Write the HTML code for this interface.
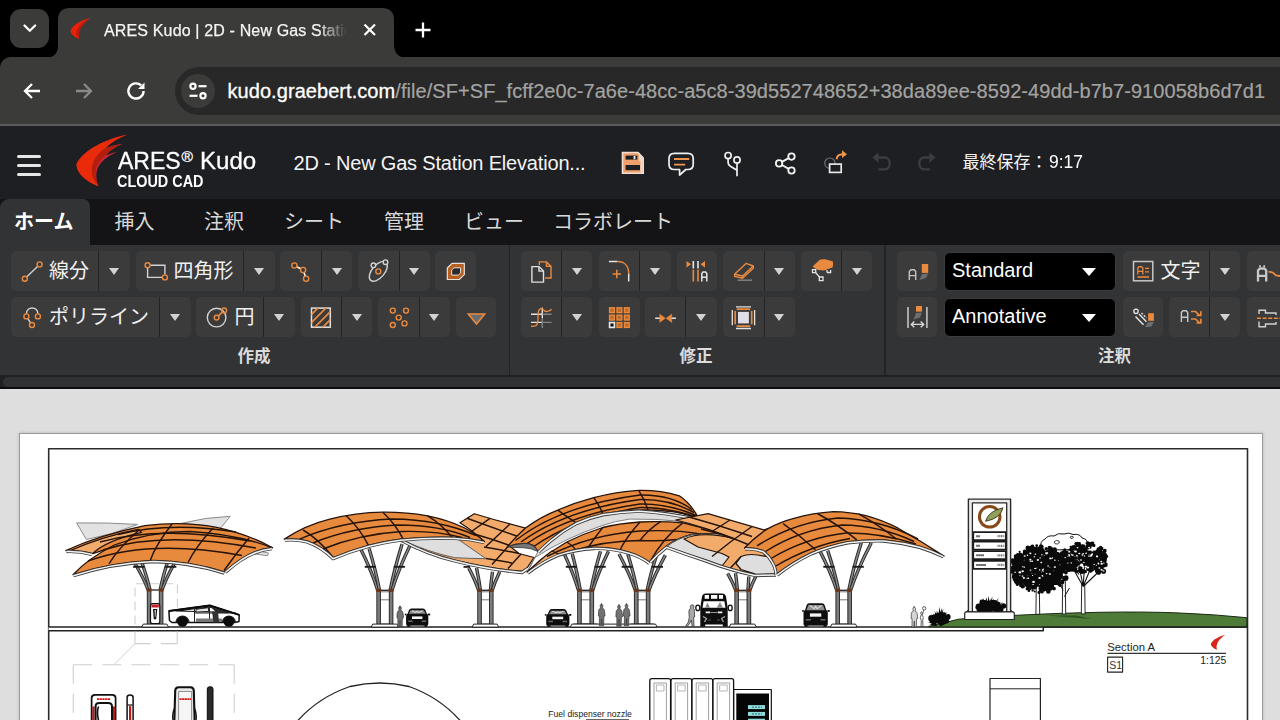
<!DOCTYPE html>
<html><head><meta charset="utf-8"><title>ARES Kudo</title>
<style>
*{box-sizing:border-box;margin:0;padding:0}
html,body{width:1280px;height:720px;overflow:hidden;background:#000;font-family:"Liberation Sans",sans-serif;color:#fff}
.abs{position:absolute}
.t{position:absolute;white-space:pre;line-height:1}
#page{position:relative;width:1280px;height:720px;overflow:hidden;background:#000}
.btn{position:absolute;height:40px;background:#3b3b3c;border-radius:5px}
.btn i{position:absolute;top:0;width:1px;height:40px;background:#232325}
.dd{position:absolute;width:0;height:0;margin:.3px 0 0 1.7px;border-left:5.3px solid transparent;border-right:5.3px solid transparent;border-top:7.4px solid #d2d2d2}
</style></head><body><div id="page">
<!-- browser chrome -->
<div class="abs" style="left:10px;top:9px;width:39px;height:39px;border-radius:11px;background:#3b3b39"></div>
<svg class="abs" style="left:22px;top:23px" width="16" height="12" viewBox="0 0 16 12"><path d="M2.5 2.5 L7.8 7.8 L13.1 2.5" fill="none" stroke="#fff" stroke-width="2.3" stroke-linecap="round" stroke-linejoin="round"/></svg>
<!-- toolbar -->
<div class="abs" style="left:0;top:57px;width:1280px;height:68px;background:#3b3b39;border-top-left-radius:11px"></div>
<!-- tab -->
<svg class="abs" style="left:44px;top:8px" width="380" height="50" viewBox="0 0 380 50"><path d="M0 50 Q14 50 14 38 V12 Q14 0 26 0 H338 Q350 0 350 12 V36 Q350 50 364 50 Z" fill="#3b3b39"/></svg>
<!-- favicon -->
<svg class="abs" style="left:69px;top:17px" width="24" height="24" viewBox="0 0 24 24"><path d="M21.300 1 C13 3 3.500 7.500 1.600 13.600 C1.500 17 5.500 20.500 10.200 21.900 C8 16 12 7.500 21.300 1 Z" fill="#e8220a"/><path d="M21.300 1 C13 5 7 11.500 7.300 16.500 C7.500 19 9 20.800 10.200 21.900 C8 16 12 7.500 21.300 1 Z" fill="#b81a10"/></svg>
<div class="t" style="left:104px;top:23.100px;font-size:16px;letter-spacing:.15px;color:#f4f4f4;-webkit-text-stroke:.25px #f4f4f4;width:246px;overflow:hidden;-webkit-mask-image:linear-gradient(90deg,#000 214px,transparent 243px);mask-image:linear-gradient(90deg,#000 214px,transparent 243px)">ARES Kudo | 2D - New Gas Station</div>
<svg class="abs" style="left:362px;top:22px" width="16" height="16" viewBox="0 0 16 16"><path d="M2.5 2.5 L13 13 M13 2.5 L2.5 13" stroke="#fff" stroke-width="2.2" fill="none"/></svg>
<svg class="abs" style="left:413px;top:20px" width="20" height="20" viewBox="0 0 20 20"><path d="M10 2.5 V17.5 M2.5 10 H17.5" stroke="#fff" stroke-width="2.3" fill="none"/></svg>
<!-- nav icons -->
<svg class="abs" style="left:22px;top:81px" width="20" height="20" viewBox="0 0 20 20"><path d="M18 10 H3.5 M10 3 L3 10 L10 17" stroke="#fff" stroke-width="2.3" fill="none" stroke-linejoin="miter"/></svg>
<svg class="abs" style="left:74px;top:81px" width="20" height="20" viewBox="0 0 20 20"><path d="M2 10 H16.5 M10 3 L17 10 L10 17" stroke="#8a8a88" stroke-width="2.3" fill="none"/></svg>
<svg class="abs" style="left:125px;top:80px" width="22" height="22" viewBox="0 0 22 22"><path d="M18.6 11 A7.6 7.6 0 1 1 16.2 5.4" stroke="#fff" stroke-width="2.4" fill="none"/><path d="M19.5 2.5 V9 H13 Z" fill="#fff"/></svg>
<!-- url bar -->
<div class="abs" style="left:175px;top:67px;width:1130px;height:48px;border-radius:24px;background:#282828"></div>
<div class="abs" style="left:181px;top:74px;width:34px;height:34px;border-radius:17px;background:#3b3b39"></div>
<svg class="abs" style="left:187px;top:80px" width="22" height="22" viewBox="0 0 22 22"><g stroke="#fff" stroke-width="2.2" fill="none"><circle cx="6" cy="6.2" r="2.6"/><path d="M11.5 6.2 H19.5"/><circle cx="16" cy="15.8" r="2.6"/><path d="M2.5 15.8 H10.5"/></g></svg>
<div class="t" style="left:227.500px;top:81.300px;font-size:20px;letter-spacing:.06px;color:#fff;-webkit-text-stroke:.3px #fff">kudo.graebert.com<span style="color:#a3a3a1;letter-spacing:.06px;-webkit-text-stroke:.2px #a3a3a1">/file/SF+SF_fcff2e0c-7a6e-48cc-a5c8-39d552748652+38da89ee-8592-49dd-b7b7-910058b6d7d1</span></div>
<div class="abs" style="left:0;top:124px;width:1280px;height:1.5px;background:#5a5a5a"></div>
<!-- app header -->
<div class="abs" style="left:0;top:125.5px;width:1280px;height:73px;background:#1e1f22"></div>
<div class="abs" style="left:17px;top:154.5px;width:24px;height:3px;border-radius:1.5px;background:#e6e6e6"></div>
<div class="abs" style="left:17px;top:163.5px;width:24px;height:3px;border-radius:1.5px;background:#e6e6e6"></div>
<div class="abs" style="left:17px;top:172.5px;width:24px;height:3px;border-radius:1.5px;background:#e6e6e6"></div>
<svg class="abs" style="left:0;top:0" width="1280" height="720" viewBox="0 0 1280 720"><path d="M126.900 134.700 C108 138.500 84 149 76.700 163.600 C75.500 171.500 85 181.500 98.400 186.200 C95.500 178 95.500 171 99.300 165.300 C103.500 159 110 155 117.100 152 C112 153 108 154.500 105.600 155.600 C110 150 116 146.500 122.400 144 C115 145 109 146.500 105.600 148 C111 142.500 118 138 126.900 134.700 Z" fill="#c8263a"/><path d="M122.400 144 C113 145.500 106 148 103 149.500 C95 156 90 166 92 176 C93 180 95.500 183.500 98.400 186.200 C94.500 177 95 170 97.500 165.500 C100 160.500 103 157.500 105.600 155.600 C110 150 116 146.500 122.400 144 Z" fill="#b41e0c"/><path d="M126.900 134.700 C108 138.500 84 149 76.700 163.600 C75.500 171.500 85 181.500 98.400 186.200 C93.500 180.500 91 174 92 166 C93.500 158 99 152 105.600 148 C111 142.500 118 138 126.900 134.700 Z" fill="#e92b0a"/></svg>
<div class="t" style="left:118px;top:149.800px;font-size:23.6px;transform:scaleX(.976);transform-origin:0 0;color:#fff;-webkit-text-stroke:.3px #fff">ARES</div>
<div class="t" style="left:181.400px;top:149.200px;font-size:15.500px;color:#fff;-webkit-text-stroke:.3px #fff">®</div>
<div class="t" style="left:199.500px;top:149.800px;font-size:23.6px;transform:scaleX(1.02);transform-origin:0 0;color:#fff;-webkit-text-stroke:.3px #fff">Kudo</div>
<div class="t" style="left:117.400px;top:174.100px;font-size:15.600px;font-weight:700;transform:scaleX(.925);transform-origin:0 0;color:#fff">CLOUD CAD</div>
<div class="t" style="left:293.5px;top:153px;font-size:20px;letter-spacing:-.18px;color:#f4f4f4">2D - New Gas Station Elevation...</div>
<div class="t" style="left:1048.800px;top:154.300px;font-size:17.8px;transform:scaleX(.985);transform-origin:0 0;color:#fff">9:17</div>
<svg class="abs" style="left:0;top:0" width="1280" height="720" viewBox="0 0 1280 720" fill="none">
<!-- save -->
<path d="M621.700 151.700 H638.300 L644 157.400 V174 H621.700 Z" fill="#f2dfd2"/>
<path d="M623.300 153.300 H637.600 L642.400 158.100 V172.400 H623.300 Z" fill="#f0a06c"/>
<path d="M639 153.300 L642.400 156.800 V172.400 H640.500 V161 H639 Z" fill="#ecdcd4"/>
<rect x="625.600" y="155.600" width="11.700" height="4" fill="#1e1f22"/>
<rect x="633.600" y="156" width="1.800" height="3.200" fill="#f4f4f4"/>
<rect x="625.600" y="165" width="14.400" height="5.200" fill="#1e1f22"/>
<!-- comment -->
<path d="M674.500 153.300 H687.700 C691.500 153.300 693.200 155.500 693.200 158.500 V164.500 C693.200 167.500 691.500 169.500 687.700 169.500 H685.800 L679.600 175 V169.500 H674.500 C670.700 169.500 669 167.500 669 164.500 V158.500 C669 155.500 670.700 153.300 674.500 153.300 Z" stroke="#f0f0f0" stroke-width="1.700" stroke-linejoin="round"/>
<path d="M674 159 H689.200 M674 164.600 H685.200" stroke="#f0964e" stroke-width="1.800"/>
<!-- branch -->
<g stroke="#f0f0f0" stroke-width="1.700"><circle cx="728.100" cy="155.600" r="3.100"/><circle cx="737" cy="159.900" r="3.100"/><path d="M737 163 V176.200 M728.100 158.700 V162.500 C728.100 165 729.500 165.800 737 170.300"/></g>
<!-- share -->
<g stroke="#f4f4f4" stroke-width="1.800"><circle cx="791.500" cy="156.600" r="3.200"/><circle cx="779.100" cy="163.400" r="3.200"/><circle cx="791.500" cy="170.500" r="3.200"/><path d="M781.900 161.900 L788.700 158.100 M781.900 165 L788.700 168.900"/></g>
<!-- export -->
<circle cx="829.900" cy="163.200" r="5.200" stroke="#6e6f72" stroke-width="1.200"/>
<rect x="829.600" y="164.100" width="11.600" height="8.300" stroke="#e8e8e8" stroke-width="1.700" fill="#1e1f22"/>
<path d="M836.700 159.300 C836.700 155.800 839 154.200 843 154.200" stroke="#f0964e" stroke-width="2"/>
<path d="M842 150.300 L847 154.200 L842 158.100 Z" fill="#f0964e"/>
<!-- undo / redo -->
<g stroke="#3c3d40" stroke-width="2.300"><path d="M877 157.500 H884.500 C891.500 157.500 891.500 169.300 884.500 169.300 H878.400"/><path d="M931 157.500 H924.500 C917.500 157.500 917.500 169.300 924.500 169.300 H929.800"/></g>
<path d="M872.400 157.500 L878.500 152.300 V162.700 Z M935.500 157.500 L929.400 152.300 V162.700 Z" fill="#3c3d40"/>
</svg>
<!-- tab bar + ribbon -->
<div class="abs" style="left:0;top:198.5px;width:1280px;height:47px;background:#141416"></div>
<div class="abs" style="left:0;top:198.5px;width:90px;height:48px;background:#323335;border-top-left-radius:9px;border-top-right-radius:7px"></div>
<div class="abs" style="left:0;top:245px;width:1280px;height:130.500px;background:#323335"></div>
<div class="abs" style="left:0;top:375px;width:1280px;height:15px;background:#0c0c0e"></div><div class="abs" style="left:0;top:375px;width:1280px;height:12.300px;background:#202022"></div>
<div class="abs" style="left:3px;top:377px;width:1290px;height:10.300px;border-radius:5px;background:#303133"></div>
<div class="abs" style="left:508.500px;top:245px;width:1.5px;height:130px;background:#242426"></div>
<div class="abs" style="left:884px;top:245px;width:1.5px;height:130px;background:#242426"></div>
<div class="btn" style="left:11px;top:251px;width:119px"><i style="left:86.5px"></i></div>
<div class="dd" style="left:107.5px;top:268px"></div>
<div class="btn" style="left:135.5px;top:251px;width:139.5px"><i style="left:107.0px"></i></div>
<div class="dd" style="left:252.5px;top:268px"></div>
<div class="btn" style="left:280px;top:251px;width:72px"><i style="left:41.0px"></i></div>
<div class="dd" style="left:330.25px;top:268px"></div>
<div class="btn" style="left:357.5px;top:251px;width:72.0px"><i style="left:41.0px"></i></div>
<div class="dd" style="left:407.75px;top:268px"></div>
<div class="btn" style="left:435px;top:251px;width:41px"></div>
<div class="btn" style="left:11px;top:297px;width:179.5px"><i style="left:147.5px"></i></div>
<div class="dd" style="left:168.25px;top:314px"></div>
<div class="btn" style="left:196px;top:297px;width:98.5px"><i style="left:67.0px"></i></div>
<div class="dd" style="left:272.5px;top:314px"></div>
<div class="btn" style="left:300.5px;top:297px;width:71.5px"><i style="left:40.0px"></i></div>
<div class="dd" style="left:350.0px;top:314px"></div>
<div class="btn" style="left:377.5px;top:297px;width:72.0px"><i style="left:41.0px"></i></div>
<div class="dd" style="left:427.75px;top:314px"></div>
<div class="btn" style="left:455.5px;top:297px;width:40.5px"></div>
<div class="btn" style="left:520.5px;top:251px;width:71.5px"><i style="left:40.5px"></i></div>
<div class="dd" style="left:570.25px;top:268px"></div>
<div class="btn" style="left:598.5px;top:251px;width:72.0px"><i style="left:40.5px"></i></div>
<div class="dd" style="left:648.5px;top:268px"></div>
<div class="btn" style="left:676.5px;top:251px;width:40.0px"></div>
<div class="btn" style="left:723px;top:251px;width:71.5px"><i style="left:40.5px"></i></div>
<div class="dd" style="left:772.75px;top:268px"></div>
<div class="btn" style="left:800.5px;top:251px;width:71.5px"><i style="left:40.5px"></i></div>
<div class="dd" style="left:850.25px;top:268px"></div>
<div class="btn" style="left:520.5px;top:297px;width:71.5px"><i style="left:40.5px"></i></div>
<div class="dd" style="left:570.25px;top:314px"></div>
<div class="btn" style="left:598.5px;top:297px;width:41.0px"></div>
<div class="btn" style="left:645px;top:297px;width:71.5px"><i style="left:40.0px"></i></div>
<div class="dd" style="left:694.5px;top:314px"></div>
<div class="btn" style="left:723px;top:297px;width:71.5px"><i style="left:40.5px"></i></div>
<div class="dd" style="left:772.75px;top:314px"></div>
<div class="btn" style="left:897px;top:251px;width:40px"></div>
<div class="btn" style="left:1122.5px;top:251px;width:117.5px"><i style="left:86.5px"></i></div>
<div class="dd" style="left:1218.25px;top:268px"></div>
<div class="btn" style="left:1246.5px;top:251px;width:43.5px"></div>
<div class="btn" style="left:897px;top:297px;width:40px"></div>
<div class="btn" style="left:1122.5px;top:297px;width:40.5px"></div>
<div class="btn" style="left:1169px;top:297px;width:71px"><i style="left:40.0px"></i></div>
<div class="dd" style="left:1218.25px;top:314px"></div>
<div class="btn" style="left:1246.5px;top:297px;width:43.5px"></div>
<div class="abs" style="left:944px;top:251.5px;width:172px;height:39px;background:#000;border:1px solid #3c3c3e;border-radius:6px"></div>
<div class="t" style="left:952px;top:260.3px;font-size:20px;color:#fff">Standard</div>
<div class="abs" style="left:1082px;top:267.5px;width:0;height:0;border-left:7.5px solid transparent;border-right:7.5px solid transparent;border-top:8.5px solid #fff"></div>
<div class="abs" style="left:944px;top:298px;width:172px;height:39px;background:#000;border:1px solid #3c3c3e;border-radius:6px"></div>
<div class="t" style="left:952px;top:306.1px;font-size:20px;color:#fff">Annotative</div>
<div class="abs" style="left:1082px;top:314px;width:0;height:0;border-left:7.5px solid transparent;border-right:7.5px solid transparent;border-top:8.5px solid #fff"></div>
<svg class="abs" style="left:0;top:0" width="1280" height="720" viewBox="0 0 1280 720" fill="none" stroke-linecap="butt">
<defs><clipPath id="hc"><rect x="311.5" y="308.100" width="18.800" height="19.100"/></clipPath></defs>
<g stroke="#d2d2d2" stroke-width="1.4">
<!-- line -->
<path d="M26.6 276.900 L37.800 266.200"/>
<!-- rect -->
<path d="M150.200 265.300 H164.900 V274.600 M162.100 277.400 H147.600 V268"/>
<!-- polyline arc -->
<path d="M26.400 313.800 C26 306 38.300 306 37.900 313.800 M27.800 318.600 L30.600 322.900"/>
<!-- circle -->
<circle cx="216.600" cy="317.600" r="9.300"/>
<!-- 3pt polyline -->
<path d="M296.800 266.800 L300.600 268.800 M304 272.600 L305.200 276.100" stroke="#fff" stroke-width="1.6"/>
<!-- ellipse -->
<ellipse cx="378.300" cy="271.300" rx="11.800" ry="6.300" transform="rotate(-50 378.300 271.300)"/>
<circle cx="373.400" cy="265.300" r="2.300" fill="#3b3b3c"/><circle cx="385.500" cy="262.200" r="2.300" fill="#3b3b3c"/>
<!-- hatch box -->
<rect x="311.500" y="308.100" width="18.800" height="19.100" stroke-width="1.500" stroke="#e4e4e4"/>
</g>
<g stroke="#e98a3e" stroke-width="1.400">
<circle cx="39.600" cy="264.400" r="2.500"/><circle cx="24.800" cy="278.700" r="2.500"/>
<circle cx="147.600" cy="265.300" r="2.500"/><circle cx="164.900" cy="277.400" r="2.500"/>
<circle cx="26.400" cy="316.400" r="2.500"/><circle cx="37.900" cy="316.400" r="2.500"/><circle cx="32" cy="325" r="2.500"/>
<path d="M218.400 315.900 L222.400 312.100" stroke-width="1.600"/>
<circle cx="216.600" cy="317.600" r="2.400"/><circle cx="224.200" cy="310.400" r="2.400"/>
<circle cx="294.400" cy="265.500" r="2.600"/><circle cx="303.100" cy="270" r="2.600"/><circle cx="306.100" cy="278.700" r="2.600"/>
<circle cx="378.300" cy="271.400" r="2.500"/>
<g clip-path="url(#hc)" stroke-width="1.700"><path d="M305 321 L322 304 M308 326 L331 303 M312 330 L335 307 M318 332 L338 312 M324 334 L340 318"/></g>
<circle cx="392.800" cy="310.600" r="2.500"/><circle cx="406" cy="310.600" r="2.500"/><circle cx="398.700" cy="317.600" r="2.500"/><circle cx="392.800" cy="325" r="2.500"/><circle cx="404.500" cy="323.400" r="2.500"/>
</g>
<!-- region -->
<path d="M447.300 268 L452.100 263.300 H464.300 V274.600 L459.400 279.500 H447.300 Z" fill="#b5601e" stroke="#e8e0da" stroke-width="1.200"/>
<path d="M451.700 270 L454 267.800 H460.600 V272.900 L458.300 275.100 H451.700 Z" fill="#2a2a2c" stroke="#e8e0da" stroke-width="1"/>
<!-- triangle -->
<path d="M468.300 314 H484.700 L476.500 324 Z" fill="#6c6c6e" stroke="#e98a3e" stroke-width="1.600"/>
<!-- copy -->
<path d="M539.300 265 V261.900 H546.500 L551 266.400 V278 H545.200 M546.500 261.900 V266.400 H551" stroke="#e98a3e" stroke-width="1.400"/>
<path d="M531.900 266.600 H539 L543.500 271.100 V282.100 H531.900 Z M539 266.600 V271.100 H543.500" stroke="#e0e0e0" stroke-width="1.400"/>
<!-- trim -->
<path d="M531 314.200 H542.300 M531 322.400 H542.300 M542.300 307.400 V318" stroke="#e4e4e4" stroke-width="1.400"/>
<path d="M542.300 314.200 H551.600 M542.300 322.400 H551.600 M542.300 318 V327.900" stroke="#808082" stroke-width="1.400"/>
<path d="M531 326.200 C539 327.500 538 321 538 316 C538 308 541.500 307.500 543.500 310 C545.500 312.500 549.500 311.500 551.600 309.300" stroke="#e98a3e" stroke-width="1.400"/>
<!-- fillet -->
<path d="M608.900 261.400 H617.500 M628.700 273.600 V281.500" stroke="#e4e4e4" stroke-width="1.500"/>
<path d="M617.500 261.400 C624.500 261.400 628.700 266 628.700 273.600 M612.600 274 H621 M616.800 269.800 V278.200" stroke="#e98a3e" stroke-width="1.500"/>
<!-- mirror text -->
<path d="M686.500 261 L691 264.200 L686.500 267.400 Z M705 261 L700.500 264.200 L705 267.400 Z" fill="#e98a3e"/>
<path d="M693.300 261 V268.500 M698 261 V268.500" stroke="#e4e4e4" stroke-width="1.600"/>
<path d="M693.300 269.700 V281.500 M698 269.700 V281.500" stroke="#e98a3e" stroke-width="1.600"/>
<path d="M701.800 281.500 V273.500 L703 272 H705.600 L706.800 273.500 V281.500 M701.800 277.300 H706.800" stroke="#e4e4e4" stroke-width="1.500"/>
<!-- array -->
<g fill="#c06a2a" stroke="#e98a3e" stroke-width="1.400">
<rect x="609.600" y="307.800" width="4.800" height="4.800"/><rect x="617" y="307.800" width="4.800" height="4.800"/><rect x="624.400" y="307.800" width="4.800" height="4.800"/>
<rect x="609.600" y="315.200" width="4.800" height="4.800"/><rect x="617" y="315.200" width="4.800" height="4.800"/><rect x="624.400" y="315.200" width="4.800" height="4.800"/>
<rect x="617" y="322.600" width="4.800" height="4.800"/><rect x="624.400" y="322.600" width="4.800" height="4.800"/>
<rect x="609.600" y="322.600" width="4.800" height="4.800" fill="#111" stroke="#e8e8e8" stroke-width="1.700"/>
</g>
<!-- join -->
<path d="M655.200 318.300 H661 M670.500 318.300 H675.900" stroke="#e4e4e4" stroke-width="1.500"/>
<path d="M659.800 314.300 L665.300 318.300 L659.800 322.300 Z M671.700 314.300 L666.200 318.300 L671.700 322.300 Z" fill="#e98a3e" stroke="#e98a3e" stroke-width=".6"/>
<!-- eraser -->
<path d="M734.600 274.200 L746 263.400 L753.300 266 L753.300 268.200 L742.500 278.200 L734.600 276.400 Z M734.600 274.200 L742.500 276 L753.300 266 M742.500 276 V278.200" stroke="#e98a3e" stroke-width="1.400" stroke-linejoin="round"/>
<path d="M737.700 280.200 H752" stroke="#7c7c7e" stroke-width="1.600"/>
<!-- hand -->
<path d="M812.600 266.500 L819.500 260 C821 259 824 259 826 259.600 L832.500 261.200 C833.400 262 833.300 266 832.400 267.500 L824 270.400 L818.500 270 L815.500 268.800 Z" fill="#e98a3e"/>
<path d="M812.500 269.700 H815.700 V272.600 H812.500 Z M827 272.500 H830.600 V270 M827 270 V272.500 M819.300 277 H823 V280.600 H819.300 Z" stroke="#e4e4e4" stroke-width="1.300"/>
<path d="M815.700 272.600 L819.500 277" stroke="#e4e4e4" stroke-width="1.300"/>
<!-- frame -->
<rect x="738" y="311.900" width="10.900" height="11.500" fill="#e0dfe6"/>
<path d="M736.700 309.200 H750.200 M736.700 326.100 H750.200 M735.200 311 V324.300 M751.700 311 V324.300" stroke="#e98a3e" stroke-width="1.700"/>
<path d="M736 306.800 H751 M736 328.500 H751 M732.300 310 V325.300 M754.600 310 V325.300" stroke="#e4e4e4" stroke-width="1.300"/>
<!-- text style -->
<path d="M909.300 280 V271.500 L910.800 269.800 H914.200 L915.700 271.500 V280 M909.300 275.600 H915.700" stroke="#c4c4c4" stroke-width="1.400"/>
<rect x="921.800" y="264" width="6.400" height="8.900" fill="#e98a3e"/>
<path d="M921.800 274.200 L928.200 273.400 L926 278 L919.500 280 Z" fill="#6e6e70"/>
<!-- dim style -->
<path d="M908 307 V327.900 M926.900 307 V327.900" stroke="#d8d8d8" stroke-width="1.400"/>
<rect x="916" y="306" width="6" height="5.600" fill="#e98a3e"/>
<path d="M916 313 L922 312.400 L920 317.500 L913.500 319.500 Z" fill="#6e6e70"/>
<path d="M911.500 324.400 H923.500 M914.300 321.600 L911.300 324.400 L914.300 327.200 M920.700 321.600 L923.700 324.400 L920.700 327.200" stroke="#d8d8d8" stroke-width="1.400"/>
<!-- text icon -->
<rect x="1133.500" y="261.500" width="19.300" height="19.300" stroke="#c8c8c8" stroke-width="1.500"/>
<path d="M1137.800 274.500 V268 L1139 266.700 H1141.600 L1142.800 268 V274.500 M1137.800 271.300 H1142.800 M1145 268.300 H1149 M1145 271.800 H1149 M1137.500 277 H1149" stroke="#e98a3e" stroke-width="1.300"/>
<!-- big A arrow -->
<path d="M1258 281.500 V270.500 L1259.800 268.500 H1264.400 L1266.200 270.500 V281.500 M1258 275.800 H1266.200" stroke="#c8c8c8" stroke-width="2.300"/>
<path d="M1260 265.300 V267 M1264.200 265.300 V267" stroke="#c8c8c8" stroke-width="1.800"/>
<path d="M1268.500 272 C1272 271 1274 273 1276 275.500 L1280 276" stroke="#e98a3e" stroke-width="1.800"/>
<!-- leader icon -->
<circle cx="1136" cy="311.300" r="2.200" stroke="#e4e4e4" stroke-width="1.300"/>
<path d="M1135.500 316.500 L1143.500 324.800 M1139 314 L1146.500 321.700" stroke="#e4e4e4" stroke-width="1.400"/>
<path d="M1141.500 313 L1146.500 318" stroke="#e4e4e4" stroke-width="1.300" stroke-dasharray="2 1.300"/>
<rect x="1148.100" y="313.200" width="5.800" height="7.600" fill="#e98a3e"/>
<path d="M1148 322.300 L1153.900 321.700 L1151.500 326.500 L1145 327.300 Z" fill="#6e6e70"/>
<!-- A arrows -->
<path d="M1181.400 322 V312.400 L1182.900 310.800 H1186.200 L1187.700 312.400 V322 M1181.400 317.300 H1187.700" stroke="#c8c8c8" stroke-width="1.400"/>
<path d="M1191 311.500 H1195.500 L1199.500 315.300 M1196.500 315.500 H1200.800 V311.300 M1191 319 H1195.500 L1199.500 322.800 M1196.500 323 H1200.800 V318.800" stroke="#e98a3e" stroke-width="1.700"/>
<!-- last icon -->
<path d="M1259 314 V310.200 H1265.500 V313 H1276 V315 M1259 321.500 V326.800 H1265.500 V324 H1276 V322" stroke="#d0d0d0" stroke-width="1.400"/>
<path d="M1257 318.200 H1280" stroke="#e98a3e" stroke-width="1.400" stroke-dasharray="4 1.600"/>
</svg>
<!-- canvas -->
<div class="abs" style="left:0;top:389px;width:1280px;height:331px;background:#dedede"></div>
<div class="abs" style="left:19px;top:433px;width:1243.500px;height:300px;background:#fff;border:1px solid #9a9a9a;box-shadow:0 0 3px rgba(0,0,0,.18)"></div>
<svg class="abs" style="left:0;top:389.5px" width="1280" height="330.5" viewBox="0 389.5 1280 330.5" fill="none" stroke-linejoin="round">
<defs>
<style>
.o{fill:#e88a3d;stroke:#26130a;stroke-width:1.3}
.o2{fill:#f3ab6b;stroke:#26130a;stroke-width:1.2}
.g{stroke:#26130a;stroke-width:1.45;fill:none}
.e{stroke:#f4f4f4;stroke-width:1.5;fill:none}
.ed{stroke:#3a3a3a;stroke-width:3.3;fill:none}
.w{fill:#e2e2e2;stroke:#8c8c8c;stroke-width:1}
.c{stroke:#333;stroke-width:1;fill:#fff}
.k{fill:#111}
</style>
<!-- column symbol: origin = base centre on ground (y=0), local units px -->
<g id="colbase"><path d="M-12 0 L-10.500 -3.500 H10.500 L12 0 Z" fill="#fff" stroke="#222" stroke-width="1"/></g>
</defs>
<!-- inner frame -->
<path d="M48.700 730 V448.200 H1247.500 V730" stroke="#2c2c2c" stroke-width="1.600"/>
<g id="scene"><path d="M48.600 626.6 H1043.300 V630.300 H48.600" stroke="#222" stroke-width="1.500" fill="#fff"/>
<path d="M1043.300 626.6 H1247" stroke="#222" stroke-width="1.300"/>
<g stroke="#cfcfcf" stroke-width="1.100"><path d="M135 624 V583.200 H177.400 V624" stroke-dasharray="9 5"/><path d="M135 631 V643.100 H150.600 M160.800 643.100 H177.200 V631"/><path d="M73.300 664.200 H234.200" stroke-dasharray="19 10"/><path d="M73.300 664.200 V720 M234.200 664.200 V720" stroke-dasharray="19 10"/></g>
<path d="M135 643.100 L113.900 664.200" stroke="#cfcfcf" stroke-width="1"/>
<path class="w" d="M76.600 522.400 Q108 522 137.700 523.900 L112 533 L86.400 539 Z"/>
<path class="w" d="M180.800 523 Q206 516.500 230.200 515.800 L220.300 528 Q200 523.500 180.800 523 Z"/>
<path class="w" d="M249 548.500 L268.500 552.500 L267.500 555.300 L246 552 Z"/>
<path d="M148.2 589.5 Q143.7 577.6 135 563" stroke="#2c2c2c" stroke-width="3.4"/>
<path d="M148.2 589.5 Q143.7 577.6 135 563" stroke="#8a8a8a" stroke-width="1.4"/>
<path d="M150 589.5 Q147.3 577.6 142.2 563" stroke="#2c2c2c" stroke-width="3.4"/>
<path d="M150 589.5 Q147.3 577.6 142.2 563" stroke="#8a8a8a" stroke-width="1.4"/>
<path d="M133.1 566.3 H144.3" stroke="#1c1c1c" stroke-width="1.9"/>
<path d="M160.2 589.5 Q162.5 577.6 167.1 563" stroke="#2c2c2c" stroke-width="3.4"/>
<path d="M160.2 589.5 Q162.5 577.6 167.1 563" stroke="#8a8a8a" stroke-width="1.4"/>
<path d="M162 589.5 Q166.2 577.6 174.3 563" stroke="#2c2c2c" stroke-width="3.4"/>
<path d="M162 589.5 Q166.2 577.6 174.3 563" stroke="#8a8a8a" stroke-width="1.4"/>
<path d="M165.2 566.3 H176.4" stroke="#1c1c1c" stroke-width="1.9"/>
<path d="M149.1 589.5 L149.1 623.6" stroke="#2e2e2e" stroke-width="4.6"/>
<path d="M149.1 589.5 L149.1 623.6" stroke="#7c7c7c" stroke-width="2.6"/>
<path d="M161.1 589.5 L161.1 623.6" stroke="#2e2e2e" stroke-width="4.6"/>
<path d="M161.1 589.5 L161.1 623.6" stroke="#7c7c7c" stroke-width="2.6"/>
<rect x="146.8" y="587.9" width="4.6" height="3.2" fill="#6b3314"/>
<rect x="158.8" y="587.9" width="4.6" height="3.2" fill="#6b3314"/>
<path d="M151.4 589.5 H158.8" stroke="#222" stroke-width="1.3"/>
<path d="M141.7 626.6 L143.3 623.6 H166.9 L168.5 626.6 Z" fill="#fff" stroke="#222" stroke-width="1"/>
<path d="M152.300 603.200 H158 Q159.800 603.200 159.800 605.500 V621 Q159.800 623 158 623 H152.300 Q150.500 623 150.500 621 V605.500 Q150.500 603.200 152.300 603.200 Z" fill="#fff" stroke="#111" stroke-width="1.200"/>
<rect x="151.500" y="604" width="7.300" height="3" fill="#c8202a"/>
<path d="M153 608.500 L157.300 608.500 L156.300 618 Q155 620 153.700 618 Z" fill="#111"/><path d="M154.600 609.500 L155.800 609.500 L155.400 616.500 L154.900 616.500 Z" fill="#fff"/>
<path class="o" d="M65.800 550 Q100 534.500 144.800 525.200 Q182 520.500 216.700 526.800 Q248 533.500 272.400 547.200 Q258 545.500 246 553 Q160 528 92.700 553.200 Q80 549.500 65.800 550 Z"/>
<path class="o" d="M73 574.200 Q88 558 114.300 544.500 Q150 531 190 531 Q236 533.500 272.400 547.200 Q250 548.500 224.800 571.500 Q190 560.500 153.800 559.900 Q112 561.500 73 574.200 Z"/>
<path class="o2" d="M70 550.300 Q100 536.500 138 528.800 L141.500 531.800 Q106 540 92.700 553 Q82 550 70 550.300 Z"/>
<path class="g" d="M88 560.500 Q150 538 242 555 M103 549.500 Q162 530 256 547.500 M100 541.500 Q160 524.500 250 540.500 M118 534 Q170 521 236 531.500"/>
<path class="g" d="M108.900 563.500 Q118 548 139.500 529 M150.200 559.900 Q156 544 172 523.500 M188 562 Q196 546 213 527.500 M224 570 Q236 553 249 537.500"/>
<path class="ed" d="M73.400 575.300 Q112 562.700 153.800 561.100 Q190 561.700 224.400 572.600"/><path class="e" d="M73.400 575.300 Q112 562.700 153.800 561.100 Q190 561.700 224.400 572.600"/>
<path class="ed" d="M66.400 551 Q80 550.600 92 554"/><path class="e" d="M66.400 551 Q80 550.600 92 554"/>
<path class="ed" d="M225.600 571.800 Q250 549.600 272 548.200"/><path class="e" d="M225.600 571.800 Q250 549.600 272 548.200"/>
<path d="M168.900 610.600 L209.700 605 L239.200 614.400 L239 621 L234.500 622 H172 L169.500 620 Z" fill="#fff" stroke="#111" stroke-width="1.500"/>
<path d="M176 610.500 L209.500 606.500 L228 612.200 L207 611.200 Z" fill="#fff" stroke="#111" stroke-width="1.100"/>
<path d="M194.500 608.200 V621.500 M209.500 606.500 V621.500 M215 612 V622 M194.500 612.500 H236" stroke="#222" stroke-width="1"/>
<path d="M196 618 H222 V621.500 H196 Z" fill="#777"/>
<path d="M175.500 622 A7 7 0 0 1 189.500 622 Z M221.900 622 A7 7 0 0 1 235.900 622 Z" fill="#222"/>
<circle cx="182.500" cy="621" r="5.300" fill="#0c0c0c"/><circle cx="228.900" cy="621" r="5.300" fill="#0c0c0c"/>
<path d="M212 611 L218 611 L219 622 L213.500 622 Z" fill="#333"/>
<path d="M168.900 610.600 L209.700 605 L239.200 614.400" stroke="#0a0a0a" stroke-width="2" fill="none"/>
<path d="M210.500 606.300 L229 612.300 L216 611.800 Z" fill="#2a2a2a"/>
<path d="M196 608.800 L208.500 607.200 L208.500 611 L196 611.600 Z" fill="#e8e8e8" stroke="#111" stroke-width=".9"/><path d="M377.7 589.8 Q371.9 571 360.5 548" stroke="#2c2c2c" stroke-width="3.4"/>
<path d="M377.7 589.8 Q371.9 571 360.5 548" stroke="#8a8a8a" stroke-width="1.4"/>
<path d="M379.5 589.8 Q376 571 369.1 548" stroke="#2c2c2c" stroke-width="3.4"/>
<path d="M379.5 589.8 Q376 571 369.1 548" stroke="#8a8a8a" stroke-width="1.4"/>
<path d="M364.7 566.3 H375.9" stroke="#1c1c1c" stroke-width="1.9"/>
<path d="M390.2 589.8 Q394.2 569 402.1 543.6" stroke="#2c2c2c" stroke-width="3.4"/>
<path d="M390.2 589.8 Q394.2 569 402.1 543.6" stroke="#8a8a8a" stroke-width="1.4"/>
<path d="M392 589.8 Q398.4 569 410.7 543.6" stroke="#2c2c2c" stroke-width="3.4"/>
<path d="M392 589.8 Q398.4 569 410.7 543.6" stroke="#8a8a8a" stroke-width="1.4"/>
<path d="M393.7 566.3 H404.9" stroke="#1c1c1c" stroke-width="1.9"/>
<rect x="380.2" y="591.3" width="9.3" height="32" fill="#fff" stroke="#555" stroke-width=".8"/>
<path d="M380.2 599.3 H389.5" stroke="#555" stroke-width=".8"/>
<path d="M378.6 589.8 L378.6 623.6" stroke="#2e2e2e" stroke-width="4.6"/>
<path d="M378.6 589.8 L378.6 623.6" stroke="#7c7c7c" stroke-width="2.6"/>
<path d="M391.1 589.8 L391.1 623.6" stroke="#2e2e2e" stroke-width="4.6"/>
<path d="M391.1 589.8 L391.1 623.6" stroke="#7c7c7c" stroke-width="2.6"/>
<rect x="376.3" y="588.2" width="4.6" height="3.2" fill="#6b3314"/>
<rect x="388.8" y="588.2" width="4.6" height="3.2" fill="#6b3314"/>
<path d="M380.9 589.8 H388.8" stroke="#222" stroke-width="1.3"/>
<path d="M371.2 626.6 L372.8 623.6 H396.9 L398.5 626.6 Z" fill="#fff" stroke="#222" stroke-width="1"/>
<path d="M478.6 589.8 Q475.2 579.7 468.7 567.4" stroke="#2c2c2c" stroke-width="3.4"/>
<path d="M478.6 589.8 Q475.2 579.7 468.7 567.4" stroke="#8a8a8a" stroke-width="1.4"/>
<path d="M480.4 589.8 Q479.1 579.7 476.5 567.4" stroke="#2c2c2c" stroke-width="3.4"/>
<path d="M480.4 589.8 Q479.1 579.7 476.5 567.4" stroke="#8a8a8a" stroke-width="1.4"/>
<path d="M490.4 589.8 Q491.1 581.5 492.5 571.3" stroke="#2c2c2c" stroke-width="3.4"/>
<path d="M490.4 589.8 Q491.1 581.5 492.5 571.3" stroke="#8a8a8a" stroke-width="1.4"/>
<path d="M492.2 589.8 Q494.8 581.5 499.7 571.3" stroke="#2c2c2c" stroke-width="3.4"/>
<path d="M492.2 589.8 Q494.8 581.5 499.7 571.3" stroke="#8a8a8a" stroke-width="1.4"/>
<rect x="481.1" y="591.3" width="8.6" height="32" fill="#fff" stroke="#555" stroke-width=".8"/>
<path d="M481.1 599.3 H489.7" stroke="#555" stroke-width=".8"/>
<path d="M479.5 589.8 L479.5 623.6" stroke="#2e2e2e" stroke-width="4.6"/>
<path d="M479.5 589.8 L479.5 623.6" stroke="#7c7c7c" stroke-width="2.6"/>
<path d="M491.3 589.8 L491.3 623.6" stroke="#2e2e2e" stroke-width="4.6"/>
<path d="M491.3 589.8 L491.3 623.6" stroke="#7c7c7c" stroke-width="2.6"/>
<rect x="477.2" y="588.2" width="4.6" height="3.2" fill="#6b3314"/>
<rect x="489" y="588.2" width="4.6" height="3.2" fill="#6b3314"/>
<path d="M481.8 589.8 H489" stroke="#222" stroke-width="1.3"/>
<path d="M472.1 626.6 L473.7 623.6 H497.1 L498.7 626.6 Z" fill="#fff" stroke="#222" stroke-width="1"/>
<path d="M463.500 566.400 H470" stroke="#222" stroke-width="1.800"/>
<path d="M578.5 589.8 Q573.6 573.3 564.2 553.2" stroke="#2c2c2c" stroke-width="3.4"/>
<path d="M578.5 589.8 Q573.6 573.3 564.2 553.2" stroke="#8a8a8a" stroke-width="1.4"/>
<path d="M580.3 589.8 Q577.5 573.3 572.2 553.2" stroke="#2c2c2c" stroke-width="3.4"/>
<path d="M580.3 589.8 Q577.5 573.3 572.2 553.2" stroke="#8a8a8a" stroke-width="1.4"/>
<path d="M565.8 566.3 H577" stroke="#1c1c1c" stroke-width="1.9"/>
<path d="M590.9 589.8 Q594.2 572.2 600.5 550.7" stroke="#2c2c2c" stroke-width="3.4"/>
<path d="M590.9 589.8 Q594.2 572.2 600.5 550.7" stroke="#8a8a8a" stroke-width="1.4"/>
<path d="M592.7 589.8 Q598.1 572.2 608.5 550.7" stroke="#2c2c2c" stroke-width="3.4"/>
<path d="M592.7 589.8 Q598.1 572.2 608.5 550.7" stroke="#8a8a8a" stroke-width="1.4"/>
<path d="M594.5 566.3 H605.7" stroke="#1c1c1c" stroke-width="1.9"/>
<rect x="581" y="591.3" width="9.2" height="32" fill="#fff" stroke="#555" stroke-width=".8"/>
<path d="M581 599.3 H590.2" stroke="#555" stroke-width=".8"/>
<path d="M579.4 589.8 L579.4 623.6" stroke="#2e2e2e" stroke-width="4.6"/>
<path d="M579.4 589.8 L579.4 623.6" stroke="#7c7c7c" stroke-width="2.6"/>
<path d="M591.8 589.8 L591.8 623.6" stroke="#2e2e2e" stroke-width="4.6"/>
<path d="M591.8 589.8 L591.8 623.6" stroke="#7c7c7c" stroke-width="2.6"/>
<rect x="577.1" y="588.2" width="4.6" height="3.2" fill="#6b3314"/>
<rect x="589.5" y="588.2" width="4.6" height="3.2" fill="#6b3314"/>
<path d="M581.7 589.8 H589.5" stroke="#222" stroke-width="1.3"/>
<path d="M572 626.6 L573.6 623.6 H597.6 L599.2 626.6 Z" fill="#fff" stroke="#222" stroke-width="1"/>
<path d="M635.3 589.8 Q629.8 573.5 619 553.5" stroke="#2c2c2c" stroke-width="3.4"/>
<path d="M635.3 589.8 Q629.8 573.5 619 553.5" stroke="#8a8a8a" stroke-width="1.4"/>
<path d="M637.1 589.8 Q633.9 573.5 627.8 553.5" stroke="#2c2c2c" stroke-width="3.4"/>
<path d="M637.1 589.8 Q633.9 573.5 627.8 553.5" stroke="#8a8a8a" stroke-width="1.4"/>
<path d="M621.6 566.3 H632.8" stroke="#1c1c1c" stroke-width="1.9"/>
<path d="M647.2 589.8 Q650.4 574 656.6 554.6" stroke="#2c2c2c" stroke-width="3.4"/>
<path d="M647.2 589.8 Q650.4 574 656.6 554.6" stroke="#8a8a8a" stroke-width="1.4"/>
<path d="M649 589.8 Q654.6 574 665.4 554.6" stroke="#2c2c2c" stroke-width="3.4"/>
<path d="M649 589.8 Q654.6 574 665.4 554.6" stroke="#8a8a8a" stroke-width="1.4"/>
<path d="M651.8 566.3 H663" stroke="#1c1c1c" stroke-width="1.9"/>
<rect x="637.8" y="591.3" width="8.7" height="32" fill="#fff" stroke="#555" stroke-width=".8"/>
<path d="M637.8 599.3 H646.5" stroke="#555" stroke-width=".8"/>
<path d="M636.2 589.8 L636.2 623.6" stroke="#2e2e2e" stroke-width="4.6"/>
<path d="M636.2 589.8 L636.2 623.6" stroke="#7c7c7c" stroke-width="2.6"/>
<path d="M648.1 589.8 L648.1 623.6" stroke="#2e2e2e" stroke-width="4.6"/>
<path d="M648.1 589.8 L648.1 623.6" stroke="#7c7c7c" stroke-width="2.6"/>
<rect x="633.9" y="588.2" width="4.6" height="3.2" fill="#6b3314"/>
<rect x="645.8" y="588.2" width="4.6" height="3.2" fill="#6b3314"/>
<path d="M638.5 589.8 H645.8" stroke="#222" stroke-width="1.3"/>
<path d="M628.8 626.6 L630.4 623.6 H653.9 L655.5 626.6 Z" fill="#fff" stroke="#222" stroke-width="1"/>
<path d="M570.300 626.6 L571.900 623.6 H655.500 L657.100 626.6 Z" fill="#fff" stroke="#222" stroke-width="1"/>
<path d="M735.7 589.8 Q733 582.1 727.7 572.8" stroke="#2c2c2c" stroke-width="3.4"/>
<path d="M735.7 589.8 Q733 582.1 727.7 572.8" stroke="#8a8a8a" stroke-width="1.4"/>
<path d="M737.5 589.8 Q736.8 582.1 735.5 572.8" stroke="#2c2c2c" stroke-width="3.4"/>
<path d="M737.5 589.8 Q736.8 582.1 735.5 572.8" stroke="#8a8a8a" stroke-width="1.4"/>
<path d="M748 589.8 Q748.3 583.6 748.8 576" stroke="#2c2c2c" stroke-width="3.4"/>
<path d="M748 589.8 Q748.3 583.6 748.8 576" stroke="#8a8a8a" stroke-width="1.4"/>
<path d="M749.8 589.8 Q751.8 583.6 755.8 576" stroke="#2c2c2c" stroke-width="3.4"/>
<path d="M749.8 589.8 Q751.8 583.6 755.8 576" stroke="#8a8a8a" stroke-width="1.4"/>
<rect x="738.2" y="591.3" width="9.1" height="32" fill="#fff" stroke="#555" stroke-width=".8"/>
<path d="M738.2 599.3 H747.3" stroke="#555" stroke-width=".8"/>
<path d="M736.6 589.8 L736.6 623.6" stroke="#2e2e2e" stroke-width="4.6"/>
<path d="M736.6 589.8 L736.6 623.6" stroke="#7c7c7c" stroke-width="2.6"/>
<path d="M748.9 589.8 L748.9 623.6" stroke="#2e2e2e" stroke-width="4.6"/>
<path d="M748.9 589.8 L748.9 623.6" stroke="#7c7c7c" stroke-width="2.6"/>
<rect x="734.3" y="588.2" width="4.6" height="3.2" fill="#6b3314"/>
<rect x="746.6" y="588.2" width="4.6" height="3.2" fill="#6b3314"/>
<path d="M738.9 589.8 H746.6" stroke="#222" stroke-width="1.3"/>
<path d="M729.2 626.6 L730.8 623.6 H754.7 L756.3 626.6 Z" fill="#fff" stroke="#222" stroke-width="1"/>
<path d="M836.8 589.8 Q831 571.9 819.7 550.1" stroke="#2c2c2c" stroke-width="3.4"/>
<path d="M836.8 589.8 Q831 571.9 819.7 550.1" stroke="#8a8a8a" stroke-width="1.4"/>
<path d="M838.6 589.8 Q834.9 571.9 827.7 550.1" stroke="#2c2c2c" stroke-width="3.4"/>
<path d="M838.6 589.8 Q834.9 571.9 827.7 550.1" stroke="#8a8a8a" stroke-width="1.4"/>
<path d="M823.3 566.3 H834.5" stroke="#1c1c1c" stroke-width="1.9"/>
<path d="M848.8 589.8 Q853 568.4 861.3 542.3" stroke="#2c2c2c" stroke-width="3.4"/>
<path d="M848.8 589.8 Q853 568.4 861.3 542.3" stroke="#8a8a8a" stroke-width="1.4"/>
<path d="M850.6 589.8 Q857.6 568.4 871.3 542.3" stroke="#2c2c2c" stroke-width="3.4"/>
<path d="M850.6 589.8 Q857.6 568.4 871.3 542.3" stroke="#8a8a8a" stroke-width="1.4"/>
<path d="M852.6 566.3 H863.8" stroke="#1c1c1c" stroke-width="1.9"/>
<rect x="839.3" y="591.3" width="8.8" height="32" fill="#fff" stroke="#555" stroke-width=".8"/>
<path d="M839.3 599.3 H848.1" stroke="#555" stroke-width=".8"/>
<path d="M837.7 589.8 L837.7 623.6" stroke="#2e2e2e" stroke-width="4.6"/>
<path d="M837.7 589.8 L837.7 623.6" stroke="#7c7c7c" stroke-width="2.6"/>
<path d="M849.7 589.8 L849.7 623.6" stroke="#2e2e2e" stroke-width="4.6"/>
<path d="M849.7 589.8 L849.7 623.6" stroke="#7c7c7c" stroke-width="2.6"/>
<rect x="835.4" y="588.2" width="4.6" height="3.2" fill="#6b3314"/>
<rect x="847.4" y="588.2" width="4.6" height="3.2" fill="#6b3314"/>
<path d="M840 589.8 H847.4" stroke="#222" stroke-width="1.3"/>
<path d="M830.3 626.6 L831.9 623.6 H855.5 L857.1 626.6 Z" fill="#fff" stroke="#222" stroke-width="1"/>
<path class="o2" d="M459.900 522.200 L474.300 513.200 Q500 521 525.500 527.600 L509 545 L519 553 L534 557 L527.300 567.200 L521.900 570.700 Q490 568 454.700 559.500 Q436 555 420 548.500 L456.500 537.700 L484.300 541 Q474 531 459.900 522.200 Z"/>
<path class="g" d="M467 517.800 Q490 526 518 536 M476 534 Q492 538.500 510 545 M484 546.500 Q500 549 519 553 M490 517.800 L470 532 M510 523.500 L486 546 M509 545 L492 564 M521 553.500 L508 568 M486 558 Q500 560 512 562.500"/>
<path d="M400.800 538.600 Q430 540 456.500 537.700 L486 558.200 Q470 558 454.700 557.200 Q427 551.500 400.800 538.600 Z" fill="#dedede" stroke="#555" stroke-width=".9"/>
<path class="ed" d="M400.800 539.600 Q427 554 454.700 560.500 Q490 569.500 521.900 572 L528 568"/><path class="e" d="M400.800 539.600 Q427 554 454.700 560.500 Q490 569.500 521.900 572 L528 568"/>
<path class="o" d="M284.300 538.600 Q306 524.500 328.900 518.900 Q356 512 382.800 511.700 Q406 511.500 427.700 515.300 Q448 519.500 463.700 527 Q476 533.500 484.300 541 Q470 537.500 454.700 536.800 Q427 536 400.800 538.600 Q383 541 368.400 544.900 Q350 550 333.400 557.100 Q322 545.500 307.300 540.400 Q296 537.500 284.300 538.600 Z"/>
<path class="g" d="M299 538.800 Q340 521 392 518.500 Q440 519 476 535 M313 542.500 Q350 527 398 524.500 Q440 524.500 470 537 M323 548.500 Q360 533.500 402 531 Q436 530 462 537"/>
<path class="g" d="M303 529.500 Q318 538 333.400 557.100 M346 515 Q360 528 368.400 544.900 M382.800 511.700 Q396 524 403 538.400 M427.700 515.300 Q442 524 452 536.800"/>
<path class="ed" d="M284.800 539.700 Q296 538.600 307 541.500 Q321.500 546.500 333 558.200 Q350 551 368.400 546 Q383 542.100 400.800 539.700 Q427 537.100 454.700 537.900 Q470 538.600 484 542"/><path class="e" d="M284.800 539.700 Q296 538.600 307 541.500 Q321.500 546.500 333 558.200 Q350 551 368.400 546 Q383 542.100 400.800 539.700 Q427 537.100 454.700 537.900 Q470 538.600 484 542"/>
<path class="o" d="M507.100 546.500 Q516 536 525.500 527.600 Q540 516.500 557.800 509.600 Q575 502 593.800 497.100 Q616 491.500 638.700 489.900 Q660 489.500 679.300 495.300 Q691 503 699.100 518.600 Q683 511.500 664.900 510.500 Q651 509.200 638.700 509.600 Q620 510.500 602.700 513.200 Q588 516.500 575.800 522.200 Q562 529.500 550.600 539.300 Q544 545 538 551 Q534 542.500 524 543 Q514 543.500 507.100 546.500 Z"/>
<path class="g" d="M515.500 540 Q560 505 640 494.500 Q672 494 692 509 M521 541.500 Q566 509 640 499 Q670 498.500 694 512 M527 543 Q570 513.500 640 503.500 Q668 503 696.500 515 M533 546.500 Q574 517.500 640 507 Q666 506.500 698 517"/>
<path class="g" d="M557.800 509.600 Q568 517 575.800 522.200 M593.800 497.100 Q600 506 602.700 513.200 M638.700 489.900 Q645 500 648 509.500"/>
<path d="M507.100 546.500 Q514 543.500 524 543 Q534 542.500 538 551 Q531 547.500 524 547.300 Q514 547 507.100 546.500 Z" fill="#777" stroke="#333" stroke-width=".8"/>
<path d="M538 551 Q544 545 550.600 539.300 Q562 529.500 575.800 522.200 Q588 516.500 602.700 513.200 Q620 510.500 638.700 509.600 Q664.900 510.500 699.100 518.600 L735 538.400 L720 535 L682.900 521 Q655 518 629.700 518.600 Q615 520.500 602.700 524.900 Q584 531 566.800 539.300 Q549 548 534.500 557.300 L527.300 571.600 Z" fill="#dedede" stroke="#666" stroke-width=".8"/>
<path class="ed" d="M538.500 551.600 Q544 546 550.600 540.400 Q562 530.600 575.800 523.300 Q588 517.600 602.700 514.300 Q620 511.600 638.700 510.700 Q664.900 511.600 698.500 519.500"/><path class="e" d="M538.500 551.600 Q544 546 550.600 540.400 Q562 530.600 575.800 523.300 Q588 517.600 602.700 514.300 Q620 511.600 638.700 510.700 Q664.900 511.600 698.500 519.500"/>
<path class="o" d="M527.300 571.600 L540 560 Q552 550 566.800 541.500 Q584 533 602.700 527 Q618 523 640 521.500 Q662 520.500 682.900 522.400 Q706 527.500 727.800 535.700 L735 538.400 Q727 534.500 720.600 533.900 Q706 532.500 691.900 533.900 Q678 537 666.700 545.600 Q657 553 649.600 561.800 Q640 555 629.700 551.900 Q612 546.500 593.800 546.900 Q575 548 557.800 553.800 Q541 561 527.300 571.600 Z"/>
<path class="o2" d="M527.300 571.600 L540 560 Q545 555.500 552 550.500 L560 554.500 Q541 562.500 527.300 571.600 Z" stroke="none"/>
<path class="g" d="M547 556 Q590 534 640 530.500 Q676 529 701 533.500 M570 551 Q606 540 640 540 Q660 541 676 539"/>
<path class="g" d="M566.800 541.500 Q574 546 576 550 M602.700 527 Q594 538 587.500 548 M640 521.500 Q626 537 620 549.500 M682.900 522.400 Q664 536 649.600 561.800 M661 520.800 Q648 529 640 540"/>
<path class="ed" d="M527.800 572.700 Q541 562.100 557.800 554.900 Q575 549.100 593.800 548 Q612 547.600 629.700 553 Q640 556.100 649.300 562.800"/><path class="e" d="M527.800 572.700 Q541 562.100 557.800 554.900 Q575 549.100 593.800 548 Q612 547.600 629.700 553 Q640 556.100 649.300 562.800"/>
<path class="ed" d="M650.300 562 Q657 554 666.700 546.600 Q678 538.100 691.900 535 Q706 533.600 720.600 535 Q727 535.600 734.500 539.200"/><path class="e" d="M650.300 562 Q657 554 666.700 546.600 Q678 538.100 691.900 535 Q706 533.600 720.600 535 Q727 535.600 734.500 539.200"/>
<path d="M666.700 546 Q678 537.500 691.900 534.300 Q712 532 735 539 L763 550.500 L773.200 562 L776.300 573 L754.800 573.900 Q728 568 706.300 559.500 Q685 552.500 666.700 546 Z" fill="#dedede" stroke="#444" stroke-width="1"/>
<path class="o2" d="M675.700 519.500 L708 513.200 Q736 521.500 763.800 529.400 L781 525 L745 547.400 L762 550 L766 556 Q750 552 741 556 L736 563 L741 569 L754.800 573.400 Q735 570 722 565.500 L729 556.500 L722 553 L698 546.500 L684 538.500 Q702 530 735 538.400 Q705 526.500 675.700 519.500 Z"/>
<path class="g" d="M690 516.700 Q720 525 752 536 M701 528.500 Q725 534 748 544 M730 519.500 L712 531 M752 526 L731 541 L712 556 M741 556 L730 568"/>
<path class="ed" d="M667 547 Q685 553.600 706.300 560.600 Q728 569 754.800 575 L776 574.500"/><path class="e" d="M667 547 Q685 553.600 706.300 560.600 Q728 569 754.800 575 L776 574.500"/>
<path class="o" d="M744.500 547.500 Q755 536.500 767 528.600 Q780 521.500 793.900 517.900 Q813 512.500 833.400 511.200 Q850 511.500 865.800 515.200 Q882 519.500 898.100 527.700 Q922 541 944 555.600 Q932 549.500 919.700 545.700 Q902 541 883.800 539.400 Q865 539 847.800 541.200 Q829 545 811.900 552 Q793 561 776.800 573.600 Q776 566.500 773.200 561.900 Q769 554 763.400 550.200 Q754 546.500 744.500 547.500 Z"/>
<path class="g" d="M757 545.300 Q795 521.500 838 517.500 Q880 518.500 918 538.500 M765.500 551 Q800 529 842 524.500 Q880 525 914 541 M771 558 Q806 537 846 532.500 Q880 532 916 543.500 M775 566 Q810 545 850 538"/>
<path class="g" d="M783.100 523.200 Q800 535 815.500 549.300 M817.300 513 Q838 524 856.800 539.400 M858.600 513.400 Q878 524 896.300 538.500"/>
<path class="ed" d="M745 548.600 Q754 547.600 763.200 551.300 Q768.500 555 772.600 562.500 Q775.300 567 776.200 574.500"/><path class="e" d="M745 548.600 Q754 547.600 763.200 551.300 Q768.500 555 772.600 562.500 Q775.300 567 776.200 574.500"/>
<path class="ed" d="M777.200 574.600 Q793 562.100 811.900 553.100 Q829 546.100 847.800 542.300 Q865 540.100 883.800 540.500 Q902 542.100 919.700 546.800 Q932 550.600 943.500 556.400"/><path class="e" d="M777.200 574.600 Q793 562.100 811.900 553.100 Q829 546.100 847.800 542.300 Q865 540.100 883.800 540.500 Q902 542.100 919.700 546.800 Q932 550.600 943.500 556.400"/>
<rect x="407.3" y="622.3" width="3.6" height="4" fill="#0c0c0c"/><rect x="423.5" y="622.3" width="3.6" height="4" fill="#0c0c0c"/>
<path d="M406.1 623.7 V616.2 Q406.1 613.7 407.7 613.1 L409 609.6 Q409.7 608 411.4 608 H423 Q424.7 608 425.4 609.6 L426.7 613.1 Q428.3 613.7 428.3 616.2 V623.7 Q428.3 625.3 426.3 625.3 H408.1 Q406.1 625.3 406.1 623.7 Z" fill="#0e0e0e"/>
<path d="M408.8 613.3 L410.5 609.7 H423.9 L425.6 613.3 Z" fill="#8e8e8e"/>
<path d="M411.9 610.2 L415.7 611.9 L417.2 610.6 L418.7 611.9 L422.5 610.2" stroke="#d8d8d8" stroke-width="1.1" fill="none"/>
<path d="M428 614 h2.2" stroke="#0e0e0e" stroke-width="1.8"/><path d="M406.4 614 h-1.6" stroke="#0e0e0e" stroke-width="1.6"/>
<rect x="412" y="615.9" width="10.4" height="2.6" fill="#f2f2f2"/>
<path d="M408.3 620.8 h4.4 M426.1 620.8 h-4.4" stroke="#6a6a6a" stroke-width="1.6"/>
<path d="M409.7 625.4 H424.7" stroke="#777" stroke-width="1"/>
<path d="M399.5 605.8 c1.500 0 2 1.200 1.800 2.400 c-.1 .8 -.5 1.200 -.5 1.600 c1.500 .4 2.100 1.600 2.300 3.400 l.4 4.100 l-1.100 .2 l-.3 8.700 l-1.700 0 l-.3 -6.200 l-.5 6.200 l-1.800 0 l.1 -8.700 l-1 -.2 l.2 -4.100 c.1 -1.800 .7 -3 2.200 -3.400 c0 -.4 -.5 -.8 -.6 -1.600 c-.2 -1.200 .3 -2.400 1.800 -2.400 Z" fill="#727272" stroke="#333" stroke-width=".7"/>
<rect x="547.4" y="622.3" width="3.7" height="4" fill="#0c0c0c"/><rect x="564.5" y="622.3" width="3.7" height="4" fill="#0c0c0c"/>
<path d="M546.2 623.7 V616.6 Q546.2 614.1 547.8 613.5 L549.2 610.2 Q549.9 608.6 551.8 608.6 H563.8 Q565.7 608.6 566.4 610.2 L567.8 613.5 Q569.4 614.1 569.4 616.6 V623.7 Q569.4 625.3 567.4 625.3 H548.2 Q546.2 625.3 546.2 623.7 Z" fill="#0e0e0e"/>
<path d="M549 613.7 L550.8 610.3 H564.8 L566.6 613.7 Z" fill="#8e8e8e"/>
<path d="M552.2 610.8 L556.3 612.3 L557.8 611.2 L559.3 612.3 L563.4 610.8" stroke="#d8d8d8" stroke-width="1.1" fill="none"/>
<path d="M569.1 614.4 h2.2" stroke="#0e0e0e" stroke-width="1.8"/><path d="M546.5 614.4 h-1.6" stroke="#0e0e0e" stroke-width="1.6"/>
<rect x="552.3" y="616.2" width="10.9" height="2.5" fill="#f2f2f2"/>
<path d="M548.5 621 h4.6 M567.1 621 h-4.6" stroke="#6a6a6a" stroke-width="1.6"/>
<path d="M549.9 625.4 H565.7" stroke="#777" stroke-width="1"/>
<path d="M601 603.5 c1.500 0 2 1.200 1.800 2.400 c-.1 .8 -.5 1.200 -.5 1.600 c1.500 .4 2.100 1.600 2.300 3.400 l.4 4.600 l-1.100 .2 l-.3 9.600 l-1.700 0 l-.3 -6.900 l-.5 6.900 l-1.800 0 l.1 -9.600 l-1 -.2 l.2 -4.600 c.1 -1.800 .7 -3 2.200 -3.400 c0 -.4 -.5 -.8 -.6 -1.600 c-.2 -1.200 .3 -2.400 1.800 -2.400 Z" fill="#727272" stroke="#333" stroke-width=".7"/>
<path d="M618.5 604.5 c1.500 0 2 1.200 1.800 2.400 c-.1 .8 -.5 1.200 -.5 1.600 c1.500 .4 2.100 1.600 2.300 3.400 l.4 4.400 l-1.100 .2 l-.3 9.200 l-1.700 0 l-.3 -6.600 l-.5 6.600 l-1.800 0 l.1 -9.200 l-1 -.2 l.2 -4.400 c.1 -1.800 .7 -3 2.200 -3.400 c0 -.4 -.5 -.8 -.6 -1.600 c-.2 -1.200 .3 -2.400 1.800 -2.400 Z" fill="#727272" stroke="#333" stroke-width=".7"/>
<path d="M626 603.5 c1.500 0 2 1.200 1.800 2.400 c-.1 .8 -.5 1.200 -.5 1.600 c1.500 .4 2.100 1.600 2.300 3.400 l.4 4.600 l-1.100 .2 l-.3 9.600 l-1.700 0 l-.3 -6.900 l-.5 6.900 l-1.800 0 l.1 -9.600 l-1 -.2 l.2 -4.600 c.1 -1.800 .7 -3 2.200 -3.400 c0 -.4 -.5 -.8 -.6 -1.600 c-.2 -1.200 .3 -2.400 1.800 -2.400 Z" fill="#727272" stroke="#333" stroke-width=".7"/>
<path d="M692.300 604.300 c1.300 0 1.800 1 1.600 2.100 c-.1 .7 -.5 1 -.6 1.400 c.8 .4 1.200 1.600 1.200 3.200 l.1 5.500 l-1 .1 l.4 9.400 l-1.800 0 l-.9 -6.500 l-2.200 4.500 l-2.600 2 l-.7 -1.300 l2.200 -2.200 l1.300 -5.800 l-.4 -5 c0 -1.700 .5 -3.300 1.800 -3.900 c-.2 -.4 -.4 -.8 -.4 -1.500 c0 -1.100 .7 -2 2 -2 Z" fill="#a8a8a8" stroke="#333" stroke-width=".8"/>
<rect x="804.7" y="622.3" width="3.9" height="4" fill="#0c0c0c"/><rect x="822.7" y="622.3" width="3.9" height="4" fill="#0c0c0c"/>
<path d="M803.5 623.7 V612.6 Q803.5 610.1 805.1 609.5 L806.7 604.4 Q807.4 602.8 809.3 602.8 H822 Q823.9 602.8 824.6 604.4 L826.2 609.5 Q827.8 610.1 827.8 612.6 V623.7 Q827.8 625.3 825.8 625.3 H805.5 Q803.5 625.3 803.5 623.7 Z" fill="#0e0e0e"/>
<path d="M806.4 609.7 L808.4 604.5 H822.9 L824.9 609.7 Z" fill="#8e8e8e"/>
<path d="M809.8 605 L814.1 608.3 L815.6 605.4 L817.1 608.3 L821.5 605" stroke="#d8d8d8" stroke-width="1.1" fill="none"/>
<path d="M827.5 610.4 h2.2" stroke="#0e0e0e" stroke-width="1.8"/><path d="M803.8 610.4 h-1.6" stroke="#0e0e0e" stroke-width="1.6"/>
<rect x="809.9" y="612.9" width="11.4" height="3.3" fill="#f2f2f2"/>
<path d="M805.9 619.2 h4.9 M825.4 619.2 h-4.9" stroke="#6a6a6a" stroke-width="1.6"/>
<path d="M807.4 625.4 H823.9" stroke="#777" stroke-width="1"/>
<path d="M700.300 626.300 V607 L702 596 Q702.800 593 706 593 H722 Q725.200 593 726 596 L727.700 607 V626.300 H722.800 V624 H705.200 V626.300 Z" fill="#0e0e0e"/>
<rect x="704.700" y="594.500" width="4.300" height="3.800" fill="#fff"/><rect x="711" y="594.500" width="6.300" height="3.800" fill="#fff"/><rect x="719" y="594.500" width="4" height="3.800" fill="#fff"/>
<path d="M702.500 607.300 L703.600 600.700 H724.400 L725.500 607.300 Z" fill="#fff"/><path d="M705 607.300 L707.500 602 L710 607.300 Z M716.500 607.300 L720 601.500 L723 607.300 Z" fill="#8a8a8a"/>
<ellipse cx="697.800" cy="607.400" rx="2" ry="2.700" fill="#fff" stroke="#0e0e0e" stroke-width="1.300"/><ellipse cx="730.200" cy="607.400" rx="2" ry="2.700" fill="#fff" stroke="#0e0e0e" stroke-width="1.300"/>
<path d="M705.700 611.800 h4.600 M717.700 611.800 h4.600" stroke="#f4f4f4" stroke-width="1.800"/><path d="M711 612 h6" stroke="#999" stroke-width="1"/>
<path d="M703 616 l3.500 2 l-2 3.500 M725 616 l-3.500 2 l2 3.500" stroke="#aaa" stroke-width="1.300" fill="none"/><path d="M708 619.500 h3 M717 619.500 h3" stroke="#555" stroke-width="1.200"/>
<path d="M913.7 606.5 c1.500 0 2 1.200 1.800 2.400 c-.1 .8 -.5 1.200 -.5 1.600 c1.500 .4 2.100 1.600 2.300 3.400 l.4 4 l-1.100 .2 l-.3 8.400 l-1.700 0 l-.3 -6 l-.5 6 l-1.800 0 l.1 -8.400 l-1 -.2 l.2 -4 c.1 -1.800 .7 -3 2.200 -3.400 c0 -.4 -.5 -.8 -.6 -1.600 c-.2 -1.200 .3 -2.400 1.800 -2.400 Z" fill="#d4d4d4" stroke="#333" stroke-width=".7"/>
<path d="M921 626 l.3 -6 l-1 -3 l1 -3 c-.8 -1 -.8 -2.600 .2 -2.600 c1 0 1.200 1.600 .4 2.600 l1.400 3 l-.6 3 l.3 6 Z" fill="#fff" stroke="#333" stroke-width=".8"/><path d="M922.500 614 L923.800 609.500" stroke="#333" stroke-width=".7"/><circle cx="924.200" cy="607.800" r="1.700" fill="#fff" stroke="#333" stroke-width=".8"/><path d="M928.700 625.800 Q944 622.500 958 618.800 Q990 615.500 1016 614.800 Q1062 612.500 1100 611.800 Q1146 611 1180 612.500 Q1216 614 1246.800 617.200 V626.400 H928.700 Z" fill="#4e7b38" stroke="#1c2a14" stroke-width="1"/>
<path d="M1046 615 L1092 618.500 L1076 615" fill="#2f5222"/>
<path d="M1043.300 626.600 H1247" stroke="#222" stroke-width="1.300"/>
<path d="M1041 547 Q1039.500 541 1045 538.500 Q1048 534.500 1054 535.500 Q1058 532 1064 533.500 Q1069 531.500 1073 534 Q1080 533 1082 537.500 Q1088 538.500 1087.500 544 Q1089 548.500 1084 549 L1044 549.500 Z" fill="#fff" stroke="#111" stroke-width="1"/>
<path d="M1054 541.500 q2 -2.500 5 -1 q1.500 2 -1.500 3 q-3 .5 -3.500 -2 Z M1070 536.500 q2 -1.500 3.500 0 q-.5 1.800 -2.500 1.500 Z" fill="#fff" stroke="#111" stroke-width=".8"/>
<path d="M1036.3 585 L1035.9 613.800 H1039.700 L1039.300 585 Z" fill="#fff" stroke="#111" stroke-width=".9"/>
<path d="M1062.7 580 L1062.3 613.600 H1065.700 L1065.300 580 Z" fill="#fff" stroke="#111" stroke-width=".9"/>
<path d="M1064.500 596 L1069.500 587.500 M1063 590 L1060 583" stroke="#111" stroke-width="1"/>
<path d="M1081.700 583 L1081.300 613.400 H1085.100 L1084.700 583 Z" fill="#fff" stroke="#111" stroke-width=".9"/>
<path d="M1083.200 586 L1072 566 M1083.200 586 L1078 560 M1083.200 586 L1085 558 M1083.200 586 L1093 562 M1083.200 586 L1100 570 M1079 574 L1068 560 M1090 572 L1104 563" stroke="#111" stroke-width="1.100"/>
<path d="M1037.9 582.8a3 3 0 1 0 6 0a3 3 0 1 0 -6 0M1021.4 559.1a2.3 2.3 0 1 0 4.7 0a2.3 2.3 0 1 0 -4.7 0M1059.5 570a2.8 2.8 0 1 0 5.5 0a2.8 2.8 0 1 0 -5.5 0M1038.7 587.9a3.2 3.2 0 1 0 6.5 0a3.2 3.2 0 1 0 -6.5 0M1044.8 557a3.6 3.6 0 1 0 7.2 0a3.6 3.6 0 1 0 -7.2 0M1047 581.1a4.1 4.1 0 1 0 8.2 0a4.1 4.1 0 1 0 -8.200 0M1014.500 566.100a3.700 3.700 0 1 0 7.400 0a3.700 3.700 0 1 0 -7.400 0M1056 575.100a3.500 3.500 0 1 0 7 0a3.500 3.500 0 1 0 -7 0M1034 571.800a4.100 4.100 0 1 0 8.200 0a4.100 4.100 0 1 0 -8.200 0M1014.500 571.300a4.100 4.100 0 1 0 8.300 0a4.100 4.100 0 1 0 -8.300 0M1031.100 550.300a3.100 3.100 0 1 0 6.100 0a3.100 3.100 0 1 0 -6.100 0M1040.500 556.200a4.300 4.300 0 1 0 8.500 0a4.300 4.300 0 1 0 -8.500 0M1042.700 564.300a2.500 2.500 0 1 0 5 0a2.500 2.500 0 1 0 -5 0M1041.400 587.200a3.200 3.200 0 1 0 6.300 0a3.200 3.200 0 1 0 -6.300 0M1026.600 560.900a3.300 3.300 0 1 0 6.600 0a3.300 3.300 0 1 0 -6.600 0M1024.900 576.100a3.500 3.500 0 1 0 7 0a3.500 3.500 0 1 0 -7 0M1015.300 559.100a3.700 3.700 0 1 0 7.400 0a3.700 3.700 0 1 0 -7.400 0M1056 560.700a4.400 4.400 0 1 0 8.800 0a4.400 4.400 0 1 0 -8.800 0M1030.600 561.600a4.100 4.100 0 1 0 8.200 0a4.100 4.100 0 1 0 -8.200 0M1059.200 564.400a3.500 3.500 0 1 0 6.900 0a3.500 3.500 0 1 0 -6.900 0M1032.900 559.800a4 4 0 1 0 8.100 0a4 4 0 1 0 -8.100 0M1025.200 563.900a2.300 2.300 0 1 0 4.700 0a2.300 2.300 0 1 0 -4.700 0M1052.200 553.100a2.400 2.400 0 1 0 4.800 0a2.400 2.400 0 1 0 -4.800 0M1042 556.600a2.500 2.500 0 1 0 5.100 0a2.500 2.500 0 1 0 -5.100 0M1029.400 585a4.100 4.100 0 1 0 8.200 0a4.100 4.100 0 1 0 -8.200 0M1056 572.700a2.300 2.300 0 1 0 4.600 0a2.300 2.300 0 1 0 -4.600 0M1032.500 557.500a4.100 4.100 0 1 0 8.300 0a4.100 4.100 0 1 0 -8.300 0M1052.700 566.800a4.400 4.400 0 1 0 8.800 0a4.400 4.400 0 1 0 -8.800 0M1033.400 573.500a3.500 3.500 0 1 0 7 0a3.500 3.500 0 1 0 -7 0M1047.300 570.200a3.100 3.100 0 1 0 6.200 0a3.100 3.100 0 1 0 -6.200 0M1029.600 563.600a2.300 2.300 0 1 0 4.600 0a2.300 2.300 0 1 0 -4.600 0M1044.600 560.400a4.300 4.300 0 1 0 8.600 0a4.300 4.300 0 1 0 -8.600 0M1048.500 561.300a3.200 3.200 0 1 0 6.400 0a3.200 3.200 0 1 0 -6.400 0M1016.100 566.500a3.500 3.500 0 1 0 7 0a3.500 3.500 0 1 0 -7 0M1016.900 562.900a4.300 4.300 0 1 0 8.500 0a4.300 4.300 0 1 0 -8.500 0M1019.300 567.900a3.800 3.800 0 1 0 7.600 0a3.800 3.800 0 1 0 -7.600 0M1036.200 579.200a4.400 4.400 0 1 0 8.700 0a4.400 4.400 0 1 0 -8.700 0M1018.900 566.600a2.200 2.200 0 1 0 4.500 0a2.200 2.200 0 1 0 -4.500 0M1020.900 576a2.200 2.200 0 1 0 4.500 0a2.200 2.200 0 1 0 -4.500 0M1022.300 558.200a2.300 2.300 0 1 0 4.700 0a2.300 2.300 0 1 0 -4.700 0M1023.900 558.900a3.700 3.700 0 1 0 7.400 0a3.700 3.700 0 1 0 -7.400 0M1023 581.600a3.800 3.800 0 1 0 7.600 0a3.800 3.800 0 1 0 -7.600 0M1041.900 569.200a3.700 3.700 0 1 0 7.400 0a3.700 3.700 0 1 0 -7.400 0M1048.500 566.300a3.200 3.200 0 1 0 6.400 0a3.200 3.200 0 1 0 -6.400 0M1024.700 562.400a3 3 0 1 0 6 0a3 3 0 1 0 -6 0M1030.200 579.400a3.500 3.500 0 1 0 7 0a3.500 3.500 0 1 0 -7 0M1030.800 579.900a3.900 3.900 0 1 0 7.800 0a3.900 3.900 0 1 0 -7.800 0M1054.300 571a3.800 3.800 0 1 0 7.600 0a3.800 3.800 0 1 0 -7.600 0M1031.200 577.100a4 4 0 1 0 7.900 0a4 4 0 1 0 -7.900 0M1037.100 576.900a3.200 3.200 0 1 0 6.300 0a3.200 3.200 0 1 0 -6.300 0M1034 562.600a2.900 2.900 0 1 0 5.800 0a2.900 2.900 0 1 0 -5.800 0M1024.900 583.900a3.200 3.200 0 1 0 6.300 0a3.200 3.200 0 1 0 -6.300 0M1042.900 562.200a2.900 2.900 0 1 0 5.900 0a2.900 2.900 0 1 0 -5.900 0M1022.500 553.600a3.200 3.200 0 1 0 6.400 0a3.200 3.200 0 1 0 -6.400 0M1037.500 575.200a3.400 3.400 0 1 0 6.700 0a3.400 3.400 0 1 0 -6.700 0M1043.600 584.800a4 4 0 1 0 8.100 0a4 4 0 1 0 -8.100 0M1040.900 577.900a4 4 0 1 0 8 0a4 4 0 1 0 -8 0M1022.400 554.900a3 3 0 1 0 5.900 0a3 3 0 1 0 -5.900 0M1044.800 576.200a3.900 3.900 0 1 0 7.900 0a3.900 3.900 0 1 0 -7.900 0M1034.400 579.900a3.100 3.100 0 1 0 6.200 0a3.100 3.100 0 1 0 -6.200 0M1021.300 574.500a4.200 4.200 0 1 0 8.500 0a4.200 4.200 0 1 0 -8.500 0M1036.200 569.600a4.300 4.300 0 1 0 8.600 0a4.300 4.300 0 1 0 -8.600 0M1054.400 555.200a3.200 3.200 0 1 0 6.300 0a3.200 3.200 0 1 0 -6.300 0M1059.700 562.700a2.700 2.700 0 1 0 5.400 0a2.700 2.700 0 1 0 -5.400 0M1035.200 550.700a3.700 3.700 0 1 0 7.300 0a3.700 3.700 0 1 0 -7.300 0M1023.200 567.300a3 3 0 1 0 5.900 0a3 3 0 1 0 -5.900 0M1036.900 573.500a3.500 3.500 0 1 0 7 0a3.500 3.500 0 1 0 -7 0M1032 585.600a2.300 2.300 0 1 0 4.600 0a2.300 2.300 0 1 0 -4.600 0M1052.400 559.300a4.200 4.200 0 1 0 8.500 0a4.200 4.200 0 1 0 -8.500 0M1054.900 557.300a3.500 3.500 0 1 0 6.900 0a3.500 3.500 0 1 0 -6.900 0M1058.400 569.900a2.600 2.600 0 1 0 5.200 0a2.600 2.600 0 1 0 -5.200 0M1029.900 583.600a3.400 3.400 0 1 0 6.700 0a3.400 3.400 0 1 0 -6.700 0M1015.200 578.200a3.500 3.500 0 1 0 7.100 0a3.500 3.500 0 1 0 -7.100 0M1028.600 576.700a4.100 4.100 0 1 0 8.200 0a4.100 4.100 0 1 0 -8.200 0M1014.600 571a3 3 0 1 0 5.900 0a3 3 0 1 0 -5.900 0M1041.400 582a4 4 0 1 0 8 0a4 4 0 1 0 -8 0M1045.800 583.800a4.200 4.200 0 1 0 8.500 0a4.200 4.200 0 1 0 -8.500 0M1045.100 551.900a2.200 2.200 0 1 0 4.400 0a2.200 2.200 0 1 0 -4.400 0M1021.100 555.400a2.300 2.300 0 1 0 4.600 0a2.300 2.300 0 1 0 -4.600 0M1034.400 578.500a3.400 3.400 0 1 0 6.700 0a3.400 3.400 0 1 0 -6.700 0M1020.400 574.700a3.900 3.900 0 1 0 7.800 0a3.900 3.900 0 1 0 -7.800 0M1042.900 568.600a2.500 2.500 0 1 0 5 0a2.500 2.500 0 1 0 -5 0M1039.800 572.100a4.300 4.300 0 1 0 8.700 0a4.300 4.300 0 1 0 -8.700 0M1040.700 564a3.300 3.300 0 1 0 6.600 0a3.300 3.300 0 1 0 -6.600 0M1030.900 578.500a3 3 0 1 0 5.900 0a3 3 0 1 0 -5.900 0M1025 556.600a3 3 0 1 0 6 0a3 3 0 1 0 -6 0M1042.200 578.900a2.500 2.500 0 1 0 4.900 0a2.500 2.500 0 1 0 -4.900 0M1016.600 562.900a3 3 0 1 0 6.100 0a3 3 0 1 0 -6.100 0M1045.700 572.500a3 3 0 1 0 6 0a3 3 0 1 0 -6 0M1018.900 558a3 3 0 1 0 6.100 0a3 3 0 1 0 -6.100 0M1042.600 553.900a3.100 3.100 0 1 0 6.300 0a3.100 3.100 0 1 0 -6.300 0M1023.500 578.400a3.700 3.700 0 1 0 7.500 0a3.700 3.700 0 1 0 -7.500 0M1018 576.300a3.200 3.200 0 1 0 6.400 0a3.200 3.200 0 1 0 -6.400 0M1036.300 582.800a3.700 3.700 0 1 0 7.500 0a3.700 3.700 0 1 0 -7.500 0M1051 574a3.100 3.100 0 1 0 6.300 0a3.100 3.100 0 1 0 -6.300 0M1054.100 555.600a3 3 0 1 0 6 0a3 3 0 1 0 -6 0M1054.500 558.100a2.800 2.800 0 1 0 5.600 0a2.800 2.800 0 1 0 -5.600 0M1027 570a4 4 0 1 0 8 0a4 4 0 1 0 -8 0M1023.200 552.900a3.900 3.900 0 1 0 7.900 0a3.900 3.900 0 1 0 -7.900 0M1025.500 554a3.400 3.400 0 1 0 6.900 0a3.400 3.400 0 1 0 -6.900 0M1052.600 577.500a2.200 2.200 0 1 0 4.400 0a2.200 2.200 0 1 0 -4.400 0M1050.800 582a2.300 2.300 0 1 0 4.600 0a2.300 2.300 0 1 0 -4.600 0M1042 571.900a4.100 4.100 0 1 0 8.300 0a4.100 4.100 0 1 0 -8.300 0M1037.100 571.200a4.100 4.100 0 1 0 8.100 0a4.100 4.100 0 1 0 -8.100 0M1052.400 580.900a3.700 3.700 0 1 0 7.400 0a3.700 3.700 0 1 0 -7.400 0M1048.600 552.200a3.500 3.500 0 1 0 6.900 0a3.500 3.500 0 1 0 -6.900 0M1037 565a3.900 3.900 0 1 0 7.800 0a3.900 3.900 0 1 0 -7.800 0M1016 567.300a2.400 2.400 0 1 0 4.900 0a2.400 2.400 0 1 0 -4.900 0M1037 549.600a2.300 2.300 0 1 0 4.700 0a2.300 2.300 0 1 0 -4.700 0M1027 581.600a4 4 0 1 0 8 0a4 4 0 1 0 -8 0M1037.300 576.800a2.700 2.700 0 1 0 5.500 0a2.700 2.700 0 1 0 -5.500 0M1020.200 557.200a3.100 3.100 0 1 0 6.100 0a3.100 3.100 0 1 0 -6.100 0M1025.900 577.600a3 3 0 1 0 5.900 0a3 3 0 1 0 -5.900 0M1029.900 571.300a3.300 3.300 0 1 0 6.600 0a3.300 3.300 0 1 0 -6.600 0M1051.500 566.400a3.800 3.800 0 1 0 7.700 0a3.800 3.800 0 1 0 -7.700 0M1046.700 582.200a3.900 3.900 0 1 0 7.700 0a3.900 3.900 0 1 0 -7.700 0M1028 556.100a3.300 3.300 0 1 0 6.500 0a3.300 3.300 0 1 0 -6.500 0M1022.200 554.100a2.500 2.500 0 1 0 5.100 0a2.500 2.500 0 1 0 -5.100 0M1053.100 578.100a4.200 4.200 0 1 0 8.400 0a4.200 4.200 0 1 0 -8.400 0M1019.200 567.100a3.800 3.800 0 1 0 7.600 0a3.800 3.800 0 1 0 -7.600 0M1041.900 577.800a2.600 2.600 0 1 0 5.300 0a2.600 2.600 0 1 0 -5.300 0M1024.700 562.900a2.700 2.700 0 1 0 5.400 0a2.700 2.700 0 1 0 -5.400 0M1027.800 550.700a2.900 2.900 0 1 0 5.700 0a2.900 2.900 0 1 0 -5.700 0M1031 556.500a4.100 4.100 0 1 0 8.200 0a4.100 4.100 0 1 0 -8.200 0M1025.700 563.400a2.700 2.700 0 1 0 5.400 0a2.700 2.700 0 1 0 -5.400 0M1053.600 570.500a3 3 0 1 0 6.100 0a3 3 0 1 0 -6.100 0M1043.600 578.800a2.900 2.900 0 1 0 5.800 0a2.900 2.900 0 1 0 -5.800 0M1036.600 561.200a4.400 4.400 0 1 0 8.800 0a4.400 4.400 0 1 0 -8.800 0M1017.100 570.400a3.200 3.200 0 1 0 6.500 0a3.200 3.200 0 1 0 -6.500 0M1047.600 553.300a3.400 3.400 0 1 0 6.900 0a3.400 3.400 0 1 0 -6.900 0M1014.300 570.400a4.100 4.100 0 1 0 8.200 0a4.100 4.100 0 1 0 -8.200 0M1017.800 578.300a4.300 4.300 0 1 0 8.600 0a4.300 4.300 0 1 0 -8.600 0M1025.100 570.400a2.700 2.700 0 1 0 5.400 0a2.700 2.700 0 1 0 -5.400 0M1031 552.800a4.300 4.300 0 1 0 8.600 0a4.300 4.300 0 1 0 -8.600 0M1044.400 560.900a2.600 2.600 0 1 0 5.200 0a2.600 2.600 0 1 0 -5.200 0M1035.200 576.900a3.800 3.800 0 1 0 7.500 0a3.800 3.800 0 1 0 -7.500 0M1051.700 554.100a2.800 2.800 0 1 0 5.500 0a2.800 2.800 0 1 0 -5.500 0M1045.600 560.300a3.100 3.100 0 1 0 6.300 0a3.100 3.100 0 1 0 -6.300 0M1036.100 562.800a2.400 2.400 0 1 0 4.800 0a2.400 2.400 0 1 0 -4.800 0M1043.300 559.400a3 3 0 1 0 6 0a3 3 0 1 0 -6 0M1019.300 560.800a2.200 2.200 0 1 0 4.400 0a2.200 2.200 0 1 0 -4.400 0M1027.800 579.600a3.300 3.300 0 1 0 6.500 0a3.300 3.300 0 1 0 -6.500 0M1039.900 582.900a4.300 4.300 0 1 0 8.600 0a4.300 4.300 0 1 0 -8.600 0M1022.800 577.600a2.500 2.500 0 1 0 4.900 0a2.500 2.500 0 1 0 -4.900 0M1033.900 584.200a2.400 2.400 0 1 0 4.900 0a2.400 2.400 0 1 0 -4.900 0M1055.200 556.400a2.400 2.400 0 1 0 4.800 0a2.400 2.400 0 1 0 -4.800 0M1049.900 564.200a3.900 3.900 0 1 0 7.800 0a3.900 3.900 0 1 0 -7.800 0M1036.400 557.900a3.700 3.700 0 1 0 7.400 0a3.700 3.700 0 1 0 -7.400 0M1024 554.100a2.800 2.800 0 1 0 5.600 0a2.800 2.800 0 1 0 -5.600 0M1036.500 549.400a3.700 3.700 0 1 0 7.400 0a3.700 3.700 0 1 0 -7.400 0M1028 567a3.300 3.300 0 1 0 6.600 0a3.300 3.300 0 1 0 -6.600 0M1023.100 581.700a3.700 3.700 0 1 0 7.400 0a3.700 3.700 0 1 0 -7.400 0M1026.100 565.100a3.600 3.600 0 1 0 7.200 0a3.600 3.600 0 1 0 -7.200 0M1028.100 562.500a4.200 4.200 0 1 0 8.300 0a4.200 4.200 0 1 0 -8.300 0M1030.300 562.800a4.300 4.300 0 1 0 8.500 0a4.300 4.300 0 1 0 -8.500 0M1044.800 577.200a3.800 3.800 0 1 0 7.600 0a3.800 3.800 0 1 0 -7.600 0M1020.600 560.200a3.600 3.600 0 1 0 7.200 0a3.600 3.600 0 1 0 -7.200 0M1023.400 571.400a2.600 2.600 0 1 0 5.200 0a2.600 2.600 0 1 0 -5.200 0M1054.900 575.400a3.900 3.900 0 1 0 7.700 0a3.900 3.900 0 1 0 -7.700 0M1015.800 564a3 3 0 1 0 6 0a3 3 0 1 0 -6 0M1033.800 580.500a4.100 4.100 0 1 0 8.200 0a4.100 4.100 0 1 0 -8.200 0M1053.900 572.100a2.700 2.700 0 1 0 5.500 0a2.700 2.700 0 1 0 -5.500 0M1038.300 557a2.900 2.900 0 1 0 5.900 0a2.900 2.900 0 1 0 -5.900 0M1020.500 576.700a3.900 3.900 0 1 0 7.800 0a3.900 3.900 0 1 0 -7.800 0M1023.200 582.800a2.400 2.400 0 1 0 4.900 0a2.400 2.400 0 1 0 -4.900 0M1036 574.600a2.400 2.400 0 1 0 4.900 0a2.400 2.400 0 1 0 -4.900 0M1040.800 552.100a2.600 2.600 0 1 0 5.200 0a2.600 2.600 0 1 0 -5.200 0M1041.700 580.200a3.800 3.800 0 1 0 7.700 0a3.800 3.800 0 1 0 -7.700 0M1044.700 553a3.500 3.500 0 1 0 7 0a3.500 3.500 0 1 0 -7 0M1046.400 578.300a2.600 2.600 0 1 0 5.300 0a2.600 2.600 0 1 0 -5.300 0" fill="#0a0a0a"/>
<path d="M1022.1 566.200a0.7 0.5 0 1 0 1.3 0a0.7 0.5 0 1 0 -1.3 0M1039 584a0.5 0.4 0 1 0 1 0a0.5 0.4 0 1 0 -1 0M1045.200 552.800a1.300 0.900 0 1 0 2.500 0a1.300 0.900 0 1 0 -2.500 0M1026.100 577.200a1 0.700 0 1 0 1.900 0a1 0.700 0 1 0 -1.900 0M1023.600 555.600a1 0.700 0 1 0 2.100 0a1 0.700 0 1 0 -2.100 0M1032.200 584a0.900 0.600 0 1 0 1.800 0a0.900 0.600 0 1 0 -1.800 0M1023.600 559.600a0.500 0.400 0 1 0 1 0a0.500 0.400 0 1 0 -1 0M1041 554.300a0.900 0.600 0 1 0 1.800 0a0.900 0.600 0 1 0 -1.800 0M1023.700 566.700a0.700 0.500 0 1 0 1.300 0a0.700 0.500 0 1 0 -1.300 0M1034.300 567.900a0.900 0.600 0 1 0 1.800 0a0.900 0.600 0 1 0 -1.800 0M1029.400 559.200a1 0.700 0 1 0 1.900 0a1 0.700 0 1 0 -1.900 0M1059.400 564.300a0.600 0.400 0 1 0 1.200 0a0.600 0.400 0 1 0 -1.200 0M1043.600 555.100a0.500 0.400 0 1 0 1.100 0a0.500 0.400 0 1 0 -1.100 0M1032 575a0.600 0.400 0 1 0 1.100 0a0.600 0.400 0 1 0 -1.100 0M1017.700 564.400a0.800 0.500 0 1 0 1.500 0a0.800 0.500 0 1 0 -1.500 0M1051.800 557.900a0.600 0.400 0 1 0 1.200 0a0.600 0.400 0 1 0 -1.200 0M1049.200 557.900a1.200 0.900 0 1 0 2.500 0a1.200 0.900 0 1 0 -2.500 0M1034.600 553.700a0.800 0.500 0 1 0 1.500 0a0.800 0.500 0 1 0 -1.500 0M1045.900 552.600a1.200 0.800 0 1 0 2.400 0a1.200 0.800 0 1 0 -2.400 0M1020.600 574.400a0.900 0.600 0 1 0 1.800 0a0.900 0.600 0 1 0 -1.800 0M1042.500 570.800a0.600 0.400 0 1 0 1.100 0a0.600 0.400 0 1 0 -1.100 0M1041.400 575.200a0.900 0.600 0 1 0 1.800 0a0.900 0.600 0 1 0 -1.800 0M1033.500 556.300a0.800 0.600 0 1 0 1.700 0a0.800 0.600 0 1 0 -1.700 0M1031.300 560.700a0.900 0.600 0 1 0 1.700 0a0.900 0.600 0 1 0 -1.700 0M1039.500 557.400a0.600 0.500 0 1 0 1.300 0a0.600 0.500 0 1 0 -1.300 0M1054.100 559.700a0.800 0.600 0 1 0 1.600 0a0.800 0.600 0 1 0 -1.600 0M1027.200 577.800a1 0.700 0 1 0 2 0a1 0.700 0 1 0 -2 0M1039 569.400a0.700 0.500 0 1 0 1.300 0a0.700 0.500 0 1 0 -1.300 0M1040.400 562a0.900 0.600 0 1 0 1.700 0a0.900 0.600 0 1 0 -1.700 0M1042.300 576.100a0.600 0.400 0 1 0 1.300 0a0.600 0.400 0 1 0 -1.300 0M1031.400 572.600a0.500 0.400 0 1 0 1 0a0.500 0.400 0 1 0 -1 0M1045.700 573.100a0.900 0.600 0 1 0 1.800 0a0.900 0.600 0 1 0 -1.800 0M1041.800 569.500a0.900 0.600 0 1 0 1.700 0a0.900 0.600 0 1 0 -1.700 0M1023.200 576.600a0.500 0.400 0 1 0 1.100 0a0.500 0.400 0 1 0 -1.100 0M1027.300 574.800a0.500 0.400 0 1 0 1 0a0.500 0.400 0 1 0 -1 0M1049.200 566.700a0.600 0.400 0 1 0 1.200 0a0.600 0.400 0 1 0 -1.200 0M1029.500 569.600a1 0.700 0 1 0 2 0a1 0.700 0 1 0 -2 0M1034.500 573.600a0.500 0.400 0 1 0 1.100 0a0.500 0.400 0 1 0 -1.100 0M1036.700 559.400a1.100 0.800 0 1 0 2.300 0a1.100 0.800 0 1 0 -2.300 0M1017.500 572.200a0.700 0.500 0 1 0 1.500 0a0.700 0.500 0 1 0 -1.500 0M1038.400 577.500a1.200 0.800 0 1 0 2.300 0a1.200 0.800 0 1 0 -2.300 0M1029.800 561a0.600 0.400 0 1 0 1.100 0a0.600 0.400 0 1 0 -1.100 0M1029.400 552.800a1 0.700 0 1 0 1.900 0a1 0.700 0 1 0 -1.900 0M1042.800 568.600a0.600 0.400 0 1 0 1.100 0a0.600 0.400 0 1 0 -1.100 0M1041 571.400a0.500 0.400 0 1 0 1.100 0a0.500 0.400 0 1 0 -1.100 0M1026.800 554.800a0.700 0.500 0 1 0 1.300 0a0.700 0.500 0 1 0 -1.300 0M1053.700 566.500a1.100 0.800 0 1 0 2.300 0a1.100 0.800 0 1 0 -2.300 0M1057.900 560.100a0.500 0.400 0 1 0 1.100 0a0.500 0.400 0 1 0 -1.100 0M1032.300 581.400a1.300 0.900 0 1 0 2.500 0a1.300 0.900 0 1 0 -2.500 0M1048.700 573.500a1.200 0.800 0 1 0 2.400 0a1.200 0.800 0 1 0 -2.400 0" fill="#fff"/>
<path d="M1052.200 588.100a1.800 1.800 0 1 0 3.700 0a1.800 1.800 0 1 0 -3.700 0M1010.600 571.300a2 2 0 1 0 4.100 0a2 2 0 1 0 -4.100 0M1047.800 547.600a1.700 1.700 0 1 0 3.300 0a1.700 1.700 0 1 0 -3.300 0M1040.300 589.400a1.500 1.500 0 1 0 3 0a1.500 1.500 0 1 0 -3 0M1014.600 557.700a2 2 0 1 0 4.100 0a2 2 0 1 0 -4.100 0M1041.500 590a1.100 1.100 0 1 0 2.100 0a1.100 1.100 0 1 0 -2.100 0M1066.100 568.100a2.100 2.100 0 1 0 4.300 0a2.100 2.100 0 1 0 -4.300 0M1018.300 554.500a1.400 1.400 0 1 0 2.900 0a1.400 1.400 0 1 0 -2.900 0M1010.500 568.800a2.200 2.200 0 1 0 4.500 0a2.200 2.200 0 1 0 -4.500 0M1019.200 584.300a2.100 2.100 0 1 0 4.100 0a2.100 2.100 0 1 0 -4.100 0M1058.600 585a1.600 1.600 0 1 0 3.200 0a1.600 1.600 0 1 0 -3.200 0M1011.800 561.500a1.600 1.600 0 1 0 3.300 0a1.600 1.600 0 1 0 -3.300 0M1047.600 588a2.100 2.100 0 1 0 4.300 0a2.100 2.100 0 1 0 -4.300 0M1041 591.400a1.300 1.300 0 1 0 2.500 0a1.300 1.300 0 1 0 -2.500 0M1066.100 564a2 2 0 1 0 4 0a2 2 0 1 0 -4 0M1039.800 546.100a1.900 1.900 0 1 0 3.900 0a1.900 1.900 0 1 0 -3.900 0M1057.500 584a2.100 2.100 0 1 0 4.200 0a2.100 2.100 0 1 0 -4.200 0M1046.200 590.700a2.200 2.200 0 1 0 4.300 0a2.200 2.200 0 1 0 -4.300 0M1014.700 580.300a1.600 1.600 0 1 0 3.200 0a1.600 1.600 0 1 0 -3.200 0M1015.800 583.900a1.500 1.500 0 1 0 3 0a1.500 1.500 0 1 0 -3 0M1063.900 572.100a1.900 1.900 0 1 0 3.900 0a1.900 1.900 0 1 0 -3.900 0M1065.800 567.500a1.600 1.600 0 1 0 3.300 0a1.600 1.600 0 1 0 -3.300 0M1010.900 561.400a1.300 1.300 0 1 0 2.600 0a1.300 1.300 0 1 0 -2.600 0M1015.900 554.300a1.800 1.800 0 1 0 3.600 0a1.800 1.800 0 1 0 -3.600 0M1049.400 588a1.500 1.500 0 1 0 2.900 0a1.500 1.500 0 1 0 -2.900 0M1062.400 558.800a1.800 1.800 0 1 0 3.600 0a1.800 1.800 0 1 0 -3.600 0M1029.100 588.500a1.100 1.100 0 1 0 2.200 0a1.100 1.100 0 1 0 -2.200 0M1049.200 547.300a1.500 1.500 0 1 0 3 0a1.500 1.500 0 1 0 -3 0M1025.700 547.700a2.200 2.200 0 1 0 4.300 0a2.200 2.200 0 1 0 -4.300 0M1064 562.800a2.300 2.300 0 1 0 4.600 0a2.300 2.300 0 1 0 -4.600 0M1064.800 563.100a2.100 2.100 0 1 0 4.300 0a2.100 2.100 0 1 0 -4.300 0M1010.600 569.800a1.300 1.300 0 1 0 2.600 0a1.300 1.300 0 1 0 -2.600 0M1057.600 553.400a1.100 1.100 0 1 0 2.200 0a1.100 1.100 0 1 0 -2.200 0M1047.700 546.900a1.600 1.600 0 1 0 3.300 0a1.600 1.600 0 1 0 -3.300 0M1052 550.400a1.300 1.300 0 1 0 2.700 0a1.300 1.300 0 1 0 -2.700 0M1031.400 589.900a1.200 1.200 0 1 0 2.400 0a1.200 1.200 0 1 0 -2.400 0M1062.200 577.800a2.200 2.200 0 1 0 4.300 0a2.200 2.200 0 1 0 -4.300 0M1066.500 566.100a1.600 1.600 0 1 0 3.200 0a1.600 1.600 0 1 0 -3.200 0M1037.400 591.900a1.700 1.700 0 1 0 3.400 0a1.700 1.700 0 1 0 -3.400 0M1034.700 547.600a1.300 1.300 0 1 0 2.600 0a1.300 1.300 0 1 0 -2.600 0M1052.600 548.900a2.100 2.100 0 1 0 4.300 0a2.100 2.100 0 1 0 -4.300 0M1015.400 555.400a1.800 1.800 0 1 0 3.500 0a1.800 1.800 0 1 0 -3.500 0M1053.800 550.800a1.700 1.700 0 1 0 3.400 0a1.700 1.700 0 1 0 -3.400 0M1033.800 591.100a1 1 0 1 0 2 0a1 1 0 1 0 -2 0M1026.900 547a1 1 0 1 0 2.100 0a1 1 0 1 0 -2.100 0M1013.700 555.900a2.100 2.100 0 1 0 4.200 0a2.100 2.100 0 1 0 -4.200 0M1014.500 557.500a1.500 1.500 0 1 0 3.100 0a1.500 1.500 0 1 0 -3.100 0M1066.600 562.500a1.200 1.200 0 1 0 2.300 0a1.200 1.200 0 1 0 -2.300 0M1060.600 580.400a1 1 0 1 0 2.100 0a1 1 0 1 0 -2.100 0M1012 575.500a2.100 2.100 0 1 0 4.300 0a2.100 2.100 0 1 0 -4.300 0M1022.800 550.800a1.700 1.700 0 1 0 3.400 0a1.700 1.700 0 1 0 -3.400 0M1025.600 588.400a1.300 1.300 0 1 0 2.600 0a1.300 1.300 0 1 0 -2.600 0M1051.600 587.100a1.500 1.500 0 1 0 3 0a1.500 1.500 0 1 0 -3 0M1031.400 546.800a1.100 1.100 0 1 0 2.100 0a1.100 1.100 0 1 0 -2.100 0M1030.400 546a2 2 0 1 0 4 0a2 2 0 1 0 -4 0M1044.600 548.100a1.600 1.600 0 1 0 3.200 0a1.600 1.600 0 1 0 -3.200 0M1064.800 577.400a1.200 1.200 0 1 0 2.500 0a1.200 1.200 0 1 0 -2.500 0M1031.100 547.500a1.900 1.900 0 1 0 3.800 0a1.900 1.900 0 1 0 -3.800 0M1027.700 588a1.500 1.500 0 1 0 3 0a1.500 1.500 0 1 0 -3 0M1027.500 590.200a1.400 1.400 0 1 0 2.800 0a1.400 1.400 0 1 0 -2.800 0M1009.100 568.100a2.200 2.200 0 1 0 4.500 0a2.200 2.200 0 1 0 -4.500 0M1060.900 581.600a1.700 1.700 0 1 0 3.300 0a1.700 1.700 0 1 0 -3.300 0M1035.300 545.200a1.400 1.400 0 1 0 2.800 0a1.400 1.400 0 1 0 -2.800 0M1029 547.300a1.700 1.700 0 1 0 3.500 0a1.700 1.700 0 1 0 -3.500 0M1063.900 577.500a2.300 2.300 0 1 0 4.500 0a2.300 2.300 0 1 0 -4.500 0M1020.400 585.700a2.300 2.300 0 1 0 4.600 0a2.300 2.300 0 1 0 -4.600 0M1059.200 581.800a1.100 1.100 0 1 0 2.200 0a1.100 1.100 0 1 0 -2.200 0M1049.200 547.400a1.600 1.600 0 1 0 3.200 0a1.600 1.600 0 1 0 -3.200 0M1018.500 553.900a1.800 1.800 0 1 0 3.700 0a1.800 1.800 0 1 0 -3.700 0M1011.800 576.400a1.500 1.500 0 1 0 3 0a1.500 1.500 0 1 0 -3 0M1016.300 581a1.100 1.100 0 1 0 2.100 0a1.100 1.100 0 1 0 -2.100 0M1012.700 577.200a1.900 1.900 0 1 0 3.800 0a1.900 1.900 0 1 0 -3.800 0M1049.700 547.700a1.600 1.600 0 1 0 3.200 0a1.600 1.600 0 1 0 -3.200 0M1040.200 590.400a1.600 1.600 0 1 0 3.300 0a1.600 1.600 0 1 0 -3.300 0M1018.500 551.300a1.100 1.100 0 1 0 2.200 0a1.100 1.100 0 1 0 -2.200 0M1009.800 571.300a1.900 1.900 0 1 0 3.900 0a1.900 1.900 0 1 0 -3.900 0M1060 553.900a1.800 1.800 0 1 0 3.600 0a1.800 1.800 0 1 0 -3.600 0M1038.900 545.800a2.100 2.100 0 1 0 4.200 0a2.100 2.100 0 1 0 -4.200 0M1029.200 546.900a1.300 1.300 0 1 0 2.600 0a1.300 1.300 0 1 0 -2.600 0M1061.600 557.500a1.800 1.800 0 1 0 3.600 0a1.800 1.800 0 1 0 -3.600 0" fill="#0a0a0a"/>
<path d="M1011.200 567.600a2.900 2.900 0 1 0 5.700 0a2.900 2.900 0 1 0 -5.700 0M1022.400 570.300a3.100 3.100 0 1 0 6.200 0a3.100 3.100 0 1 0 -6.200 0M1021.300 574.100a3.100 3.100 0 1 0 6.200 0a3.100 3.100 0 1 0 -6.200 0M1012.700 566.100a1.800 1.800 0 1 0 3.600 0a1.800 1.800 0 1 0 -3.600 0M1012.600 573.900a2.500 2.500 0 1 0 4.900 0a2.500 2.500 0 1 0 -4.900 0M1016.200 572.500a1.900 1.900 0 1 0 3.900 0a1.900 1.900 0 1 0 -3.900 0M1014.800 581.500a2.800 2.800 0 1 0 5.700 0a2.800 2.800 0 1 0 -5.700 0M1021 579.800a1.800 1.800 0 1 0 3.600 0a1.800 1.800 0 1 0 -3.600 0M1015.300 570.800a1.600 1.600 0 1 0 3.200 0a1.600 1.600 0 1 0 -3.200 0M1019.600 570a1.900 1.900 0 1 0 3.900 0a1.900 1.900 0 1 0 -3.900 0M1024.400 572.100a2.100 2.100 0 1 0 4.100 0a2.100 2.100 0 1 0 -4.100 0M1022 571.400a2.700 2.700 0 1 0 5.400 0a2.700 2.700 0 1 0 -5.400 0M1018.500 581.400a2.700 2.700 0 1 0 5.400 0a2.700 2.700 0 1 0 -5.400 0M1024.300 571.200a2.100 2.100 0 1 0 4.200 0a2.100 2.100 0 1 0 -4.200 0M1015.100 575.800a1.800 1.800 0 1 0 3.700 0a1.800 1.800 0 1 0 -3.700 0M1020.500 575a2.600 2.600 0 1 0 5.100 0a2.600 2.600 0 1 0 -5.100 0M1023.400 573.200a2.100 2.100 0 1 0 4.300 0a2.100 2.100 0 1 0 -4.300 0M1014 580.600a2.400 2.400 0 1 0 4.700 0a2.400 2.400 0 1 0 -4.700 0M1014 578.700a2.700 2.700 0 1 0 5.500 0a2.700 2.700 0 1 0 -5.500 0M1024.800 576.100a1.600 1.600 0 1 0 3.300 0a1.600 1.600 0 1 0 -3.300 0M1017.400 564.700a1.600 1.600 0 1 0 3.300 0a1.600 1.600 0 1 0 -3.300 0M1017.600 567.700a2.500 2.500 0 1 0 5.100 0a2.500 2.500 0 1 0 -5.100 0M1018.800 573.100a1.900 1.900 0 1 0 3.800 0a1.900 1.900 0 1 0 -3.800 0M1019.600 571.900a2.800 2.800 0 1 0 5.600 0a2.800 2.800 0 1 0 -5.600 0M1023.900 569.300a2.200 2.200 0 1 0 4.300 0a2.200 2.200 0 1 0 -4.300 0M1012.600 578.200a2.800 2.800 0 1 0 5.700 0a2.800 2.800 0 1 0 -5.700 0" fill="#0a0a0a"/>
<path d="M1022.700 577.400a1.100 0.800 0 1 0 2.300 0a1.100 0.800 0 1 0 -2.300 0M1018.600 571.800a1.300 0.900 0 1 0 2.500 0a1.300 0.900 0 1 0 -2.500 0M1021.500 575.600a1 0.700 0 1 0 2 0a1 0.700 0 1 0 -2 0M1021.400 570.700a1.200 0.900 0 1 0 2.500 0a1.200 0.900 0 1 0 -2.500 0M1014.400 571.700a0.800 0.500 0 1 0 1.500 0a0.800 0.500 0 1 0 -1.500 0M1019.300 575a0.600 0.400 0 1 0 1.200 0a0.600 0.400 0 1 0 -1.200 0" fill="#fff"/>
<path d="M1011.300 562.700a2.200 2.200 0 1 0 4.400 0a2.200 2.200 0 1 0 -4.400 0M1016.100 563.600a2 2 0 1 0 3.900 0a2 2 0 1 0 -3.900 0M1020.200 561a1.500 1.500 0 1 0 3 0a1.500 1.500 0 1 0 -3 0M1014 562.400a1.900 1.900 0 1 0 3.800 0a1.900 1.900 0 1 0 -3.800 0M1017.700 562.300a2.200 2.200 0 1 0 4.400 0a2.200 2.200 0 1 0 -4.400 0M1010.600 559.700a1.900 1.900 0 1 0 3.900 0a1.900 1.900 0 1 0 -3.900 0M1016.300 558.500a1.600 1.600 0 1 0 3.300 0a1.600 1.600 0 1 0 -3.300 0M1013 560.200a2.400 2.400 0 1 0 4.700 0a2.400 2.400 0 1 0 -4.700 0M1014.100 559.100a1.900 1.900 0 1 0 3.800 0a1.900 1.900 0 1 0 -3.800 0M1013.700 560.900a1.400 1.400 0 1 0 2.800 0a1.400 1.400 0 1 0 -2.800 0" fill="#0a0a0a"/>
<path d="M1066.200 559.600a3.500 3.500 0 1 0 6.900 0a3.500 3.500 0 1 0 -6.900 0M1067.200 558.800a2.900 2.900 0 1 0 5.700 0a2.900 2.900 0 1 0 -5.700 0M1086.800 564.900a2.900 2.900 0 1 0 5.900 0a2.900 2.900 0 1 0 -5.900 0M1083.300 553.500a2.300 2.300 0 1 0 4.700 0a2.300 2.300 0 1 0 -4.700 0M1096.100 562.800a3 3 0 1 0 6.100 0a3 3 0 1 0 -6.100 0M1099.600 560.100a3.500 3.500 0 1 0 7.100 0a3.500 3.500 0 1 0 -7.100 0M1073 549.200a2.100 2.100 0 1 0 4.200 0a2.100 2.100 0 1 0 -4.200 0M1096.600 557.800a1.900 1.900 0 1 0 3.800 0a1.900 1.900 0 1 0 -3.800 0M1085.800 562.500a1.900 1.900 0 1 0 3.700 0a1.900 1.900 0 1 0 -3.700 0M1067.700 558.800a3.300 3.300 0 1 0 6.600 0a3.300 3.300 0 1 0 -6.600 0M1065.400 555.800a2.700 2.700 0 1 0 5.400 0a2.700 2.700 0 1 0 -5.400 0M1074.600 550.100a2.300 2.300 0 1 0 4.600 0a2.300 2.300 0 1 0 -4.600 0M1100.600 556.800a3.300 3.300 0 1 0 6.600 0a3.300 3.300 0 1 0 -6.600 0M1078.800 550.500a2.200 2.200 0 1 0 4.400 0a2.200 2.200 0 1 0 -4.400 0M1079.500 560.100a3.200 3.200 0 1 0 6.400 0a3.200 3.200 0 1 0 -6.400 0M1066.600 563.500a2.500 2.500 0 1 0 5 0a2.500 2.500 0 1 0 -5 0M1100 554.100a1.800 1.800 0 1 0 3.600 0a1.800 1.800 0 1 0 -3.600 0M1086.100 568.100a2.600 2.600 0 1 0 5.300 0a2.600 2.600 0 1 0 -5.300 0M1094.600 556.100a1.900 1.900 0 1 0 3.900 0a1.900 1.900 0 1 0 -3.900 0M1069.600 549.300a2.300 2.300 0 1 0 4.600 0a2.300 2.300 0 1 0 -4.600 0M1090.300 560.600a3.500 3.500 0 1 0 7.100 0a3.500 3.500 0 1 0 -7.100 0M1082.100 552.900a2.200 2.200 0 1 0 4.500 0a2.200 2.200 0 1 0 -4.500 0M1084.700 558.700a3.200 3.200 0 1 0 6.500 0a3.200 3.200 0 1 0 -6.500 0M1088 565.100a2.600 2.600 0 1 0 5.200 0a2.600 2.600 0 1 0 -5.200 0M1088.200 566.600a2 2 0 1 0 4.100 0a2 2 0 1 0 -4.100 0M1077.200 553.800a2.600 2.600 0 1 0 5.100 0a2.600 2.600 0 1 0 -5.100 0M1082.900 563.100a3.500 3.500 0 1 0 7.100 0a3.500 3.500 0 1 0 -7.100 0M1084.200 550.800a3.400 3.400 0 1 0 6.800 0a3.400 3.400 0 1 0 -6.800 0M1083.700 564.300a3.300 3.300 0 1 0 6.700 0a3.300 3.300 0 1 0 -6.700 0M1076.400 554a3.600 3.600 0 1 0 7.200 0a3.600 3.600 0 1 0 -7.200 0M1083.100 562.900a3.200 3.200 0 1 0 6.400 0a3.200 3.200 0 1 0 -6.400 0M1076.900 562.700a1.900 1.900 0 1 0 3.900 0a1.900 1.900 0 1 0 -3.900 0M1094.600 561.900a2.200 2.200 0 1 0 4.500 0a2.200 2.200 0 1 0 -4.500 0M1071.600 552.700a2.600 2.600 0 1 0 5.200 0a2.600 2.600 0 1 0 -5.200 0M1094.600 554.900a2.800 2.800 0 1 0 5.700 0a2.800 2.800 0 1 0 -5.700 0M1087.600 553.200a2.100 2.100 0 1 0 4.200 0a2.100 2.100 0 1 0 -4.200 0M1096.900 551.100a2.200 2.200 0 1 0 4.500 0a2.200 2.200 0 1 0 -4.500 0M1086.900 566.600a3.500 3.500 0 1 0 7 0a3.500 3.500 0 1 0 -7 0M1087 568a3.400 3.400 0 1 0 6.800 0a3.400 3.400 0 1 0 -6.800 0M1071.700 552.300a2 2 0 1 0 4 0a2 2 0 1 0 -4 0M1100.800 559.800a2.200 2.200 0 1 0 4.500 0a2.200 2.200 0 1 0 -4.500 0M1077.900 551.200a3.300 3.300 0 1 0 6.600 0a3.300 3.300 0 1 0 -6.600 0M1073 553.300a2.100 2.100 0 1 0 4.200 0a2.100 2.100 0 1 0 -4.200 0M1080.800 553.900a2.200 2.200 0 1 0 4.400 0a2.200 2.200 0 1 0 -4.400 0M1063.900 553a2.900 2.900 0 1 0 5.800 0a2.900 2.900 0 1 0 -5.800 0M1078.200 568.300a2.200 2.200 0 1 0 4.300 0a2.200 2.200 0 1 0 -4.300 0M1091.700 557.600a2.600 2.600 0 1 0 5.200 0a2.600 2.600 0 1 0 -5.200 0M1089.300 558.900a2.500 2.500 0 1 0 4.900 0a2.500 2.500 0 1 0 -4.900 0M1075 555.100a2.500 2.500 0 1 0 4.900 0a2.500 2.500 0 1 0 -4.900 0M1096.400 549.500a3 3 0 1 0 6 0a3 3 0 1 0 -6 0M1076.400 548.400a2.100 2.100 0 1 0 4.100 0a2.100 2.100 0 1 0 -4.100 0M1083.200 557.400a3.400 3.400 0 1 0 6.900 0a3.400 3.400 0 1 0 -6.900 0M1076.200 545.800a1.800 1.800 0 1 0 3.700 0a1.800 1.800 0 1 0 -3.700 0M1071.800 550.700a3.100 3.100 0 1 0 6.200 0a3.100 3.100 0 1 0 -6.200 0M1073.700 567.900a1.900 1.900 0 1 0 3.900 0a1.900 1.900 0 1 0 -3.900 0M1064.100 554.100a3.400 3.400 0 1 0 6.800 0a3.400 3.400 0 1 0 -6.800 0M1079.400 547a3.200 3.200 0 1 0 6.500 0a3.200 3.200 0 1 0 -6.500 0M1091.200 553.400a3 3 0 1 0 6.100 0a3 3 0 1 0 -6.100 0M1096.600 550.500a2.600 2.600 0 1 0 5.100 0a2.600 2.600 0 1 0 -5.100 0M1085.900 546.200a2.800 2.800 0 1 0 5.700 0a2.800 2.800 0 1 0 -5.700 0M1072.400 551.800a2.800 2.800 0 1 0 5.700 0a2.800 2.800 0 1 0 -5.700 0M1076.700 554.900a3 3 0 1 0 5.900 0a3 3 0 1 0 -5.900 0M1099.600 556.500a3.100 3.100 0 1 0 6.200 0a3.100 3.100 0 1 0 -6.200 0M1068.100 563.600a2.800 2.800 0 1 0 5.700 0a2.800 2.800 0 1 0 -5.700 0M1065 561a2 2 0 1 0 3.900 0a2 2 0 1 0 -3.900 0M1081.100 554.900a2.900 2.900 0 1 0 5.800 0a2.900 2.900 0 1 0 -5.800 0M1071.400 557.700a3.100 3.100 0 1 0 6.100 0a3.100 3.100 0 1 0 -6.100 0M1064.900 557.200a3.500 3.500 0 1 0 6.900 0a3.500 3.500 0 1 0 -6.900 0M1081.600 558.300a2.300 2.300 0 1 0 4.700 0a2.300 2.300 0 1 0 -4.700 0M1078 552.100a2.100 2.100 0 1 0 4.200 0a2.100 2.100 0 1 0 -4.200 0M1094.900 551.600a2.600 2.600 0 1 0 5.200 0a2.600 2.600 0 1 0 -5.200 0M1089.900 552.700a3 3 0 1 0 6 0a3 3 0 1 0 -6 0M1084.900 564.500a3.300 3.300 0 1 0 6.500 0a3.300 3.300 0 1 0 -6.500 0M1097.600 551.200a2.500 2.500 0 1 0 5 0a2.500 2.500 0 1 0 -5 0M1072.200 553.600a2 2 0 1 0 4.100 0a2 2 0 1 0 -4.100 0M1062.400 557.200a3.300 3.300 0 1 0 6.700 0a3.300 3.300 0 1 0 -6.700 0M1077 545.600a2.300 2.300 0 1 0 4.600 0a2.300 2.300 0 1 0 -4.600 0M1088.200 564a2.300 2.300 0 1 0 4.600 0a2.300 2.300 0 1 0 -4.600 0M1084 564.500a2.900 2.900 0 1 0 5.900 0a2.900 2.900 0 1 0 -5.900 0M1069.500 557.300a3.300 3.300 0 1 0 6.600 0a3.300 3.300 0 1 0 -6.600 0M1095.400 556.100a1.900 1.900 0 1 0 3.900 0a1.900 1.900 0 1 0 -3.900 0M1100.400 559.200a1.900 1.900 0 1 0 3.700 0a1.900 1.900 0 1 0 -3.700 0M1077.800 548.200a2.400 2.400 0 1 0 4.700 0a2.400 2.400 0 1 0 -4.700 0M1082.700 555.400a2 2 0 1 0 4.100 0a2 2 0 1 0 -4.100 0M1077.700 557.500a3.300 3.300 0 1 0 6.600 0a3.300 3.300 0 1 0 -6.600 0M1082.700 561.500a1.900 1.900 0 1 0 3.800 0a1.900 1.900 0 1 0 -3.800 0M1071.900 551.200a2.900 2.900 0 1 0 5.900 0a2.900 2.900 0 1 0 -5.900 0M1070.400 548.100a3.500 3.500 0 1 0 7.100 0a3.500 3.500 0 1 0 -7.100 0M1077.800 552.100a2.700 2.700 0 1 0 5.300 0a2.700 2.700 0 1 0 -5.300 0M1082.200 558.100a2.600 2.600 0 1 0 5.300 0a2.600 2.600 0 1 0 -5.300 0M1079.800 552a2.300 2.300 0 1 0 4.600 0a2.300 2.300 0 1 0 -4.600 0M1071.800 565.300a2.700 2.700 0 1 0 5.500 0a2.700 2.700 0 1 0 -5.500 0M1068.400 550.100a2.500 2.500 0 1 0 5 0a2.500 2.500 0 1 0 -5 0M1087 546a2 2 0 1 0 3.900 0a2 2 0 1 0 -3.900 0M1097.500 552.800a2 2 0 1 0 4.100 0a2 2 0 1 0 -4.100 0" fill="#0a0a0a"/>
<path d="M1069.100 559.500a1.200 0.900 0 1 0 2.500 0a1.200 0.900 0 1 0 -2.500 0M1073.100 562.700a1.200 0.800 0 1 0 2.400 0a1.200 0.800 0 1 0 -2.400 0M1088.200 547a0.900 0.600 0 1 0 1.700 0a0.900 0.600 0 1 0 -1.700 0M1078.200 553a1.100 0.800 0 1 0 2.200 0a1.100 0.800 0 1 0 -2.200 0M1088.900 549.100a1.100 0.800 0 1 0 2.100 0a1.100 0.800 0 1 0 -2.100 0M1086.600 567a1.300 0.900 0 1 0 2.600 0a1.300 0.900 0 1 0 -2.600 0M1095.900 555.900a1.100 0.800 0 1 0 2.300 0a1.100 0.800 0 1 0 -2.300 0M1075.500 566.300a1.200 0.800 0 1 0 2.400 0a1.200 0.800 0 1 0 -2.400 0M1080.100 559.500a0.900 0.600 0 1 0 1.700 0a0.900 0.600 0 1 0 -1.700 0M1068.100 554.100a0.900 0.600 0 1 0 1.800 0a0.900 0.600 0 1 0 -1.800 0M1099.400 558.700a0.600 0.400 0 1 0 1.100 0a0.600 0.400 0 1 0 -1.100 0M1085.500 552.700a0.800 0.500 0 1 0 1.500 0a0.800 0.500 0 1 0 -1.500 0M1085 553.100a0.600 0.400 0 1 0 1.200 0a0.600 0.400 0 1 0 -1.200 0M1067.600 556a1.200 0.800 0 1 0 2.300 0a1.200 0.800 0 1 0 -2.300 0M1076.600 547.200a0.900 0.600 0 1 0 1.800 0a0.900 0.600 0 1 0 -1.800 0M1088.300 556a0.700 0.500 0 1 0 1.400 0a0.700 0.500 0 1 0 -1.400 0M1073.400 556a1.100 0.800 0 1 0 2.200 0a1.100 0.800 0 1 0 -2.200 0M1074.500 551a1.200 0.800 0 1 0 2.300 0a1.200 0.800 0 1 0 -2.300 0M1073.900 554.800a0.800 0.600 0 1 0 1.600 0a0.800 0.600 0 1 0 -1.600 0M1093 548.500a0.700 0.500 0 1 0 1.300 0a0.700 0.500 0 1 0 -1.300 0M1093.600 548.400a0.900 0.600 0 1 0 1.800 0a0.900 0.600 0 1 0 -1.800 0M1075.800 554.900a0.900 0.700 0 1 0 1.900 0a0.900 0.700 0 1 0 -1.900 0M1069.500 556.800a0.500 0.400 0 1 0 1 0a0.500 0.400 0 1 0 -1 0M1095.900 555.500a0.800 0.600 0 1 0 1.600 0a0.800 0.600 0 1 0 -1.600 0M1087.400 549.300a0.900 0.600 0 1 0 1.800 0a0.900 0.600 0 1 0 -1.800 0M1081.400 554.400a0.900 0.700 0 1 0 1.900 0a0.900 0.700 0 1 0 -1.900 0M1067.700 562.400a1.200 0.900 0 1 0 2.500 0a1.200 0.900 0 1 0 -2.500 0M1081.900 564.400a0.600 0.400 0 1 0 1.200 0a0.600 0.400 0 1 0 -1.200 0M1067.900 560.900a1.200 0.900 0 1 0 2.400 0a1.200 0.900 0 1 0 -2.400 0M1073.300 557.900a0.700 0.500 0 1 0 1.300 0a0.700 0.500 0 1 0 -1.300 0M1070.600 550a0.600 0.400 0 1 0 1.200 0a0.600 0.400 0 1 0 -1.200 0M1083.800 555.400a0.700 0.500 0 1 0 1.300 0a0.700 0.500 0 1 0 -1.300 0M1085.400 565.900a0.800 0.500 0 1 0 1.500 0a0.800 0.500 0 1 0 -1.500 0M1074.700 563.700a0.600 0.400 0 1 0 1.200 0a0.600 0.400 0 1 0 -1.200 0M1082.300 553.200a0.900 0.600 0 1 0 1.800 0a0.900 0.600 0 1 0 -1.800 0M1083 561.800a0.900 0.600 0 1 0 1.800 0a0.900 0.600 0 1 0 -1.800 0M1073 559.600a0.800 0.600 0 1 0 1.700 0a0.800 0.600 0 1 0 -1.700 0M1076.300 556.200a0.700 0.500 0 1 0 1.300 0a0.700 0.500 0 1 0 -1.300 0M1073.300 550.700a0.900 0.600 0 1 0 1.800 0a0.900 0.600 0 1 0 -1.800 0M1091.200 550.200a1.200 0.800 0 1 0 2.400 0a1.200 0.800 0 1 0 -2.400 0M1084.500 566.200a1.100 0.800 0 1 0 2.300 0a1.100 0.800 0 1 0 -2.300 0M1091.500 553.500a0.800 0.500 0 1 0 1.500 0a0.800 0.500 0 1 0 -1.500 0M1090.100 554.600a1.300 0.900 0 1 0 2.600 0a1.300 0.900 0 1 0 -2.600 0M1088.300 554.400a0.700 0.500 0 1 0 1.400 0a0.700 0.500 0 1 0 -1.400 0" fill="#fff"/>
<path d="M1102.900 550.200a1.900 1.900 0 1 0 3.800 0a1.900 1.900 0 1 0 -3.800 0M1102.100 564.200a1.400 1.400 0 1 0 2.700 0a1.400 1.400 0 1 0 -2.700 0M1061.900 554.400a1.100 1.100 0 1 0 2.200 0a1.100 1.100 0 1 0 -2.200 0M1062.300 561.700a1.400 1.400 0 1 0 2.800 0a1.400 1.400 0 1 0 -2.800 0M1103.300 559.100a1.700 1.700 0 1 0 3.400 0a1.700 1.700 0 1 0 -3.400 0M1062.600 563.800a1.700 1.700 0 1 0 3.400 0a1.700 1.700 0 1 0 -3.400 0M1068.800 567.500a1.800 1.800 0 1 0 3.500 0a1.800 1.800 0 1 0 -3.500 0M1063.200 549.300a1.600 1.600 0 1 0 3.200 0a1.600 1.600 0 1 0 -3.200 0M1103.800 554.400a1.700 1.700 0 1 0 3.500 0a1.700 1.700 0 1 0 -3.500 0M1067.100 567.500a1.600 1.600 0 1 0 3.300 0a1.600 1.600 0 1 0 -3.300 0M1074.200 569.500a1.400 1.400 0 1 0 2.800 0a1.400 1.400 0 1 0 -2.800 0M1078.100 542.900a1.400 1.400 0 1 0 2.800 0a1.400 1.400 0 1 0 -2.800 0M1069.500 546.300a1.100 1.100 0 1 0 2.200 0a1.100 1.100 0 1 0 -2.200 0M1072.600 570.200a1.100 1.100 0 1 0 2.200 0a1.100 1.100 0 1 0 -2.200 0M1099.100 565.900a0.900 0.900 0 1 0 1.900 0a0.900 0.900 0 1 0 -1.900 0M1078.600 571.200a1.800 1.800 0 1 0 3.600 0a1.800 1.800 0 1 0 -3.600 0M1072.100 569.300a1.200 1.200 0 1 0 2.400 0a1.200 1.200 0 1 0 -2.400 0M1074.700 570.800a1.500 1.500 0 1 0 3 0a1.500 1.500 0 1 0 -3 0M1081.100 570.600a1.800 1.800 0 1 0 3.500 0a1.800 1.800 0 1 0 -3.500 0M1076.700 542.800a1.200 1.200 0 1 0 2.300 0a1.200 1.200 0 1 0 -2.300 0M1060.100 552.800a1.600 1.600 0 1 0 3.100 0a1.600 1.600 0 1 0 -3.100 0M1102.200 552.400a2 2 0 1 0 3.900 0a2 2 0 1 0 -3.900 0M1103.800 561.900a0.900 0.900 0 1 0 1.900 0a0.900 0.900 0 1 0 -1.900 0M1090.300 543.500a2 2 0 1 0 3.900 0a2 2 0 1 0 -3.900 0M1090.400 543a1.500 1.500 0 1 0 3 0a1.500 1.500 0 1 0 -3 0M1105.600 555.900a1.300 1.300 0 1 0 2.600 0a1.300 1.300 0 1 0 -2.600 0M1104.600 554.800a1.100 1.100 0 1 0 2.200 0a1.100 1.100 0 1 0 -2.200 0M1102.600 563.500a1.100 1.100 0 1 0 2.200 0a1.100 1.100 0 1 0 -2.200 0M1104.200 551a1.100 1.100 0 1 0 2.300 0a1.100 1.100 0 1 0 -2.300 0M1100.700 565.600a1.100 1.100 0 1 0 2.200 0a1.100 1.100 0 1 0 -2.200 0M1060.600 553a1.200 1.200 0 1 0 2.400 0a1.200 1.200 0 1 0 -2.400 0M1062.100 564a1.400 1.400 0 1 0 2.800 0a1.400 1.400 0 1 0 -2.800 0M1069.400 569.400a1.800 1.800 0 1 0 3.600 0a1.800 1.800 0 1 0 -3.600 0M1100.600 548.100a1.400 1.400 0 1 0 2.700 0a1.400 1.400 0 1 0 -2.700 0M1074.300 543.200a1.600 1.600 0 1 0 3.200 0a1.600 1.600 0 1 0 -3.200 0M1084.200 570.900a1.400 1.400 0 1 0 2.700 0a1.400 1.400 0 1 0 -2.700 0M1085.500 542.800a1.500 1.500 0 1 0 3 0a1.500 1.500 0 1 0 -3 0M1092.300 544.900a1.600 1.600 0 1 0 3.200 0a1.600 1.600 0 1 0 -3.200 0M1071.100 569.400a1.800 1.800 0 1 0 3.600 0a1.800 1.800 0 1 0 -3.600 0M1083.300 571.900a1 1 0 1 0 2 0a1 1 0 1 0 -2 0M1062.100 551.600a1.200 1.200 0 1 0 2.300 0a1.200 1.200 0 1 0 -2.300 0M1062 551.700a1.400 1.400 0 1 0 2.800 0a1.400 1.400 0 1 0 -2.800 0M1078.500 543.800a1.300 1.300 0 1 0 2.600 0a1.300 1.300 0 1 0 -2.600 0M1086.900 543.700a1.900 1.900 0 1 0 3.700 0a1.900 1.900 0 1 0 -3.700 0M1089.400 570.900a1.100 1.100 0 1 0 2.200 0a1.100 1.100 0 1 0 -2.200 0M1062 561.400a1 1 0 1 0 2 0a1 1 0 1 0 -2 0M1075.400 543.500a1.700 1.700 0 1 0 3.300 0a1.700 1.700 0 1 0 -3.300 0M1060.800 553.500a1.500 1.500 0 1 0 3 0a1.500 1.500 0 1 0 -3 0M1076.100 571.200a1 1 0 1 0 2 0a1 1 0 1 0 -2 0M1099.100 546.600a1.400 1.400 0 1 0 2.900 0a1.400 1.400 0 1 0 -2.900 0M1086.300 542.700a1.600 1.600 0 1 0 3.100 0a1.600 1.600 0 1 0 -3.100 0M1077.100 570.500a1.300 1.300 0 1 0 2.600 0a1.300 1.300 0 1 0 -2.600 0M1075.200 571.100a1.300 1.300 0 1 0 2.600 0a1.300 1.300 0 1 0 -2.600 0M1065.400 566.200a1.800 1.800 0 1 0 3.600 0a1.800 1.800 0 1 0 -3.600 0M1060.600 559a1.200 1.200 0 1 0 2.400 0a1.200 1.200 0 1 0 -2.400 0M1079.100 570.400a1.100 1.100 0 1 0 2.300 0a1.100 1.100 0 1 0 -2.300 0M1080.500 571.700a1.500 1.500 0 1 0 2.900 0a1.500 1.500 0 1 0 -2.900 0M1100 566.100a1 1 0 1 0 2.100 0a1 1 0 1 0 -2.100 0M1061.900 551.300a1.800 1.800 0 1 0 3.700 0a1.800 1.800 0 1 0 -3.700 0M1081.500 571.700a1.200 1.200 0 1 0 2.300 0a1.200 1.200 0 1 0 -2.300 0" fill="#0a0a0a"/>
<path d="M1096.300 571.400a2.400 2.400 0 1 0 4.700 0a2.400 2.400 0 1 0 -4.700 0M1099.300 563.700a1.700 1.700 0 1 0 3.400 0a1.700 1.700 0 1 0 -3.400 0M1098.900 568.500a2.400 2.400 0 1 0 4.900 0a2.400 2.400 0 1 0 -4.900 0M1101.300 569.500a1.700 1.700 0 1 0 3.400 0a1.700 1.700 0 1 0 -3.400 0M1095 570.100a2.600 2.600 0 1 0 5.100 0a2.600 2.600 0 1 0 -5.100 0M1096.500 565.500a1.800 1.800 0 1 0 3.600 0a1.800 1.800 0 1 0 -3.600 0M1101 570.800a2.500 2.500 0 1 0 5.100 0a2.500 2.500 0 1 0 -5.100 0M1099.100 560.500a2.400 2.400 0 1 0 4.900 0a2.400 2.400 0 1 0 -4.900 0M1104 564.200a1.800 1.800 0 1 0 3.500 0a1.800 1.800 0 1 0 -3.500 0M1099.800 562.300a2.500 2.500 0 1 0 4.900 0a2.500 2.500 0 1 0 -4.900 0M1092.300 564.300a1.900 1.900 0 1 0 3.800 0a1.900 1.900 0 1 0 -3.800 0M1093.400 567.600a1.600 1.600 0 1 0 3.100 0a1.600 1.600 0 1 0 -3.100 0M1099.200 560.700a2.800 2.800 0 1 0 5.600 0a2.800 2.800 0 1 0 -5.600 0M1094.400 561.500a2.400 2.400 0 1 0 4.900 0a2.400 2.400 0 1 0 -4.900 0M1101.300 570a2 2 0 1 0 4 0a2 2 0 1 0 -4 0M1098.500 568.600a2.100 2.100 0 1 0 4.300 0a2.100 2.100 0 1 0 -4.300 0M1096.600 570.400a2.200 2.200 0 1 0 4.500 0a2.200 2.200 0 1 0 -4.500 0M1094.600 567.400a2.100 2.100 0 1 0 4.200 0a2.100 2.100 0 1 0 -4.200 0M1097.700 569.100a1.700 1.700 0 1 0 3.300 0a1.700 1.700 0 1 0 -3.300 0M1095.200 567.300a2.300 2.300 0 1 0 4.600 0a2.300 2.300 0 1 0 -4.600 0M1101.400 564.800a2.400 2.400 0 1 0 4.800 0a2.400 2.400 0 1 0 -4.800 0M1098.900 565.400a1.600 1.600 0 1 0 3.200 0a1.600 1.600 0 1 0 -3.200 0" fill="#0a0a0a"/>
<path d="M1100.300 561a1 0.700 0 1 0 2 0a1 0.700 0 1 0 -2 0M1100.300 569.200a1.200 0.800 0 1 0 2.400 0a1.200 0.800 0 1 0 -2.400 0M1103.200 562.600a0.700 0.500 0 1 0 1.300 0a0.700 0.500 0 1 0 -1.300 0M1100.600 563.200a1.100 0.800 0 1 0 2.100 0a1.100 0.800 0 1 0 -2.100 0M1102.600 570.400a1 0.700 0 1 0 2 0a1 0.700 0 1 0 -2 0M1097.400 563.300a1 0.700 0 1 0 2 0a1 0.700 0 1 0 -2 0M1093.400 563.800a0.800 0.600 0 1 0 1.600 0a0.800 0.600 0 1 0 -1.600 0M1097.700 562.600a0.700 0.500 0 1 0 1.500 0a0.700 0.500 0 1 0 -1.500 0M1101.500 570.200a0.600 0.400 0 1 0 1.200 0a0.600 0.400 0 1 0 -1.200 0M1098.300 567.500a1 0.700 0 1 0 2 0a1 0.700 0 1 0 -2 0" fill="#fff"/>
<path d="M1060.800 558.800a2.900 2.900 0 1 0 5.900 0a2.900 2.900 0 1 0 -5.900 0M1065.900 568.500a2.600 2.600 0 1 0 5.100 0a2.600 2.600 0 1 0 -5.100 0M1067.200 557.200a1.500 1.500 0 1 0 3.100 0a1.500 1.500 0 1 0 -3.100 0M1063.600 565.700a1.900 1.900 0 1 0 3.800 0a1.900 1.900 0 1 0 -3.800 0M1063.300 559.900a2.800 2.800 0 1 0 5.500 0a2.800 2.800 0 1 0 -5.500 0M1071.200 557.900a3 3 0 1 0 6 0a3 3 0 1 0 -6 0M1073 563.400a2.800 2.800 0 1 0 5.600 0a2.800 2.800 0 1 0 -5.600 0M1071.100 566.800a2.300 2.300 0 1 0 4.700 0a2.300 2.300 0 1 0 -4.700 0M1070.800 558.700a2.300 2.300 0 1 0 4.600 0a2.300 2.300 0 1 0 -4.600 0M1072.200 554.600a2 2 0 1 0 3.900 0a2 2 0 1 0 -3.900 0M1073.700 564.800a2.200 2.200 0 1 0 4.400 0a2.200 2.200 0 1 0 -4.400 0M1069.900 559.900a2.700 2.700 0 1 0 5.400 0a2.700 2.700 0 1 0 -5.400 0M1071.100 551.200a1.500 1.500 0 1 0 3.100 0a1.500 1.500 0 1 0 -3.100 0M1066.300 561.600a2.600 2.600 0 1 0 5.300 0a2.600 2.600 0 1 0 -5.300 0M1063.700 567.800a2.100 2.100 0 1 0 4.100 0a2.100 2.100 0 1 0 -4.100 0M1069.100 550.800a1.900 1.900 0 1 0 3.700 0a1.900 1.900 0 1 0 -3.700 0M1061.300 556.600a2.300 2.300 0 1 0 4.600 0a2.300 2.300 0 1 0 -4.600 0M1065 564a2.700 2.700 0 1 0 5.400 0a2.700 2.700 0 1 0 -5.400 0M1069.600 567.300a2.300 2.300 0 1 0 4.700 0a2.300 2.300 0 1 0 -4.700 0M1065.100 558.800a2.500 2.500 0 1 0 5 0a2.500 2.500 0 1 0 -5 0M1071.400 557.200a2 2 0 1 0 4 0a2 2 0 1 0 -4 0M1072.600 555.900a1.900 1.900 0 1 0 3.800 0a1.900 1.900 0 1 0 -3.800 0M1074 560.500a2 2 0 1 0 4 0a2 2 0 1 0 -4 0M1064 561.100a2.400 2.400 0 1 0 4.900 0a2.400 2.400 0 1 0 -4.900 0" fill="#0a0a0a"/>
<path d="M1069 555a0.600 0.400 0 1 0 1.100 0a0.600 0.400 0 1 0 -1.100 0M1075.500 559.300a0.500 0.400 0 1 0 1 0a0.500 0.400 0 1 0 -1 0M1064.400 557.100a0.800 0.600 0 1 0 1.600 0a0.800 0.600 0 1 0 -1.600 0M1068.300 551.200a1 0.700 0 1 0 1.900 0a1 0.700 0 1 0 -1.900 0M1067.100 562.500a0.700 0.500 0 1 0 1.400 0a0.700 0.500 0 1 0 -1.400 0M1070.600 562.400a0.700 0.500 0 1 0 1.300 0a0.700 0.500 0 1 0 -1.300 0M1071.400 554.500a1.100 0.800 0 1 0 2.300 0a1.100 0.800 0 1 0 -2.300 0M1074.400 556.100a0.500 0.400 0 1 0 1.100 0a0.500 0.400 0 1 0 -1.100 0" fill="#fff"/>
<rect x="968.400" y="498.600" width="42.200" height="113" fill="#ececec" stroke="#2a2a2a" stroke-width="1.400"/>
<rect x="972.400" y="502.400" width="34.300" height="109.200" fill="#fff" stroke="#2a2a2a" stroke-width="1.300"/>
<circle cx="989.700" cy="516.300" r="10.300" stroke="#88481a" stroke-width="3" fill="#fff"/>
<path d="M985.500 520.800 Q988.500 510.500 1003 507.300 Q1000.500 518 985.500 520.800 Z" fill="#93a05a" stroke="#34321a" stroke-width=".9"/>
<rect x="973.300" y="531.6" width="32.500" height="8" fill="#fff" stroke="#1c1c1c" stroke-width="1.700"/>
<path d="M976.300 535.700 h4" stroke="#444" stroke-width="2" stroke-dasharray="1.500 .5"/><path d="M997.500 535.700 h7" stroke="#777" stroke-width="2.200" stroke-dasharray="1.100 .6"/>
<rect x="973.300" y="541.2" width="32.500" height="8" fill="#fff" stroke="#1c1c1c" stroke-width="1.700"/>
<path d="M976.300 545.300 h4" stroke="#444" stroke-width="2" stroke-dasharray="1.500 .5"/><path d="M997.500 545.300 h7" stroke="#777" stroke-width="2.200" stroke-dasharray="1.100 .6"/>
<rect x="973.300" y="550.7" width="32.500" height="8" fill="#fff" stroke="#1c1c1c" stroke-width="1.700"/>
<path d="M976.300 554.800 h7.500" stroke="#444" stroke-width="2" stroke-dasharray="1.500 .5"/><path d="M997.500 554.800 h7" stroke="#777" stroke-width="2.200" stroke-dasharray="1.100 .6"/>
<rect x="973.300" y="560.3" width="32.500" height="8" fill="#fff" stroke="#1c1c1c" stroke-width="1.700"/>
<path d="M976.300 564.400 h9.500" stroke="#444" stroke-width="2" stroke-dasharray="1.500 .5"/><path d="M997.500 564.400 h7" stroke="#777" stroke-width="2.200" stroke-dasharray="1.100 .6"/>
<path d="M985.700 609.300L976.800 611.300L985.800 612.900ZM986 608.700L976.700 609.400L985.600 612.300ZM986.300 608.300L975.900 607.800L985.500 611.800ZM986.900 607.700L975.300 604.500L985.400 610.900ZM987.300 607.300L978.300 604.100L985.400 610.400ZM987.700 607.100L979 602.700L985.500 609.900ZM988.200 606.900L980.400 602.200L985.700 609.500ZM988.700 606.700L979.500 598.400L985.900 608.900ZM989.600 606.500L982.300 597.200L986.400 608.200ZM990.100 606.500L985.100 598.700L986.800 607.800ZM990.600 606.500L985.800 596.600L987.100 607.500ZM991.300 606.700L988.200 595.200L987.700 607.100ZM991.900 606.900L990.400 598.300L988.300 606.800ZM992.400 607.200L992.200 596L988.800 606.700ZM992.800 607.500L993.500 598.300L989.400 606.500ZM993.300 607.900L995 599.200L990 606.500ZM993.800 608.500L998.700 597.500L990.700 606.500ZM994 608.800L998.600 600.200L991.200 606.600ZM994.300 609.500L1001.100 600.900L991.900 606.900ZM994.500 610L1003.300 601.700L992.400 607.100ZM994.600 610.500L1002.600 604L992.800 607.400ZM994.600 611.100L1003.500 605.700L993.300 607.800ZM994.600 611.600L1003.500 607.100L993.600 608.100ZM994.400 612.400L1002.900 609.700L994 608.800Z" fill="#0a0a0a"/>
<path d="M991.200 601.600a2.400 2.400 0 1 0 4.800 0a2.400 2.400 0 1 0 -4.800 0M987.400 606.100a2.600 2.600 0 1 0 5.200 0a2.600 2.600 0 1 0 -5.200 0M975.300 606.800a2.200 2.200 0 1 0 4.500 0a2.200 2.200 0 1 0 -4.500 0M988.200 603.400a2.800 2.800 0 1 0 5.500 0a2.800 2.800 0 1 0 -5.500 0M986.400 602.800a2.400 2.400 0 1 0 4.900 0a2.400 2.400 0 1 0 -4.900 0M984.900 604a2.500 2.500 0 1 0 4.900 0a2.500 2.500 0 1 0 -4.900 0M989.800 603.600a2.800 2.800 0 1 0 5.500 0a2.800 2.800 0 1 0 -5.500 0M982.600 601.800a2.200 2.200 0 1 0 4.400 0a2.200 2.200 0 1 0 -4.400 0M998 608.500a2.800 2.800 0 1 0 5.500 0a2.800 2.800 0 1 0 -5.500 0M983.800 606.500a2 2 0 1 0 4.100 0a2 2 0 1 0 -4.100 0M981.900 604a2.900 2.900 0 1 0 5.900 0a2.900 2.900 0 1 0 -5.900 0M981.900 604.800a2.600 2.600 0 1 0 5.200 0a2.600 2.600 0 1 0 -5.200 0M978.200 609.700a2.900 2.900 0 1 0 5.800 0a2.900 2.900 0 1 0 -5.800 0M975.800 605.600a2.600 2.600 0 1 0 5.300 0a2.600 2.600 0 1 0 -5.300 0M993.100 601.400a1.800 1.800 0 1 0 3.700 0a1.800 1.800 0 1 0 -3.700 0M980.600 609a2.200 2.200 0 1 0 4.300 0a2.200 2.200 0 1 0 -4.300 0M983.500 605.200a2.900 2.900 0 1 0 5.700 0a2.900 2.900 0 1 0 -5.700 0M982.500 605.700a2.600 2.600 0 1 0 5.200 0a2.600 2.600 0 1 0 -5.200 0M985.200 608a2.400 2.400 0 1 0 4.800 0a2.400 2.400 0 1 0 -4.800 0M991.500 607.700a2.800 2.800 0 1 0 5.700 0a2.800 2.800 0 1 0 -5.700 0M986.700 605.500a2.700 2.700 0 1 0 5.500 0a2.700 2.700 0 1 0 -5.500 0M995.400 606.300a2.900 2.900 0 1 0 5.800 0a2.900 2.900 0 1 0 -5.800 0M981.900 604.100a2.300 2.300 0 1 0 4.500 0a2.300 2.300 0 1 0 -4.500 0M983 607.100a3 3 0 1 0 6 0a3 3 0 1 0 -6 0M996.200 607.100a2.700 2.700 0 1 0 5.400 0a2.700 2.700 0 1 0 -5.400 0M976.400 609a2.100 2.100 0 1 0 4.200 0a2.100 2.100 0 1 0 -4.200 0M1001 605.400a2.600 2.600 0 1 0 5.200 0a2.600 2.600 0 1 0 -5.200 0M994.700 603.900a2.800 2.800 0 1 0 5.600 0a2.800 2.800 0 1 0 -5.600 0M990.600 602.600a2.400 2.400 0 1 0 4.700 0a2.400 2.400 0 1 0 -4.700 0M985.500 602.900a1.900 1.900 0 1 0 3.800 0a1.900 1.900 0 1 0 -3.800 0M987.500 603.400a2.400 2.400 0 1 0 4.800 0a2.400 2.400 0 1 0 -4.800 0M989.500 604a1.800 1.800 0 1 0 3.700 0a1.800 1.800 0 1 0 -3.700 0M995.700 608.700a2.200 2.200 0 1 0 4.500 0a2.200 2.200 0 1 0 -4.500 0M986.700 609.400a2.900 2.900 0 1 0 5.800 0a2.900 2.900 0 1 0 -5.800 0M986.900 609.200a2.900 2.900 0 1 0 5.700 0a2.900 2.900 0 1 0 -5.700 0M981.900 604.300a2.400 2.400 0 1 0 4.700 0a2.400 2.400 0 1 0 -4.700 0M982.300 606.300a2.300 2.300 0 1 0 4.500 0a2.300 2.300 0 1 0 -4.500 0M983.400 610.200a2.200 2.200 0 1 0 4.400 0a2.200 2.200 0 1 0 -4.400 0M979.400 601.900a2.900 2.900 0 1 0 5.800 0a2.900 2.900 0 1 0 -5.800 0M979.800 608.700a2.200 2.200 0 1 0 4.400 0a2.200 2.200 0 1 0 -4.400 0M979.100 608.100a2.800 2.800 0 1 0 5.500 0a2.800 2.800 0 1 0 -5.500 0M995.400 605a1.800 1.800 0 1 0 3.600 0a1.800 1.800 0 1 0 -3.600 0M984.900 606.400a1.800 1.800 0 1 0 3.700 0a1.800 1.800 0 1 0 -3.700 0M988.100 604.300a2.700 2.700 0 1 0 5.300 0a2.700 2.700 0 1 0 -5.300 0M978.100 609.700a2.800 2.800 0 1 0 5.600 0a2.800 2.800 0 1 0 -5.600 0M992.900 606.800a2.900 2.900 0 1 0 5.900 0a2.900 2.900 0 1 0 -5.900 0" fill="#0a0a0a"/>
<path d="M964.700 619 V613 Q964.700 611.400 966.300 611.400 H1012.700 Q1014.300 611.400 1014.300 613 V619 Z" fill="#fff" stroke="#222" stroke-width="1.200"/>
<path d="M966 611.400 L968.400 609.500 M1012.800 611.400 L1010.600 609.500" stroke="#222" stroke-width="1"/>
<path d="M936.600 622.200L929.500 624.100L936.600 625.800ZM936.900 621.600L928.100 621.600L936.400 625.200ZM937.300 621L929.600 619.400L936.200 624.400ZM938 620.100L931.800 616.600L936.100 623.100ZM938.500 619.700L931.300 613.500L936.100 622.500ZM938.900 619.500L932.700 612.800L936.200 621.900ZM939.700 619.200L934.600 610.400L936.600 620.900ZM940.300 619.200L936.600 610.500L936.900 620.300ZM940.800 619.200L937.700 610.300L937.200 620ZM941.400 619.500L939.600 606.300L937.800 619.500ZM941.900 619.900L941.700 607.300L938.400 619.200ZM942.300 620.300L943.300 608.100L938.900 619.200ZM942.600 620.800L944.200 610.900L939.400 619.200ZM942.900 621.800L946.900 611.400L940.200 619.400ZM943.100 622.400L946.600 615L940.700 619.700ZM943.100 623.200L947.800 616.500L941.200 620.100ZM943 624L950.200 617.800L941.700 620.700ZM942.900 624.800L951 620.400L942.200 621.300Z" fill="#0a0a0a"/>
<path d="M939.300 623.300a1.800 1.800 0 1 0 3.500 0a1.800 1.800 0 1 0 -3.500 0M936.900 616.500a1.900 1.900 0 1 0 3.800 0a1.900 1.900 0 1 0 -3.800 0M941.700 618a2.400 2.400 0 1 0 4.900 0a2.400 2.400 0 1 0 -4.900 0M930.800 618.900a2.200 2.200 0 1 0 4.500 0a2.200 2.200 0 1 0 -4.500 0M941.100 622.700a1.700 1.700 0 1 0 3.400 0a1.700 1.700 0 1 0 -3.400 0M937.800 618.800a1.900 1.900 0 1 0 3.900 0a1.900 1.900 0 1 0 -3.900 0M929.600 620.900a2.100 2.100 0 1 0 4.200 0a2.100 2.100 0 1 0 -4.200 0M940.600 619.800a2.900 2.900 0 1 0 5.800 0a2.900 2.900 0 1 0 -5.800 0M944.800 619.700a2.100 2.100 0 1 0 4.200 0a2.100 2.100 0 1 0 -4.200 0M934 615.300a2.500 2.500 0 1 0 5 0a2.500 2.500 0 1 0 -5 0M928.800 618.100a2.800 2.800 0 1 0 5.500 0a2.800 2.800 0 1 0 -5.500 0M934.600 617a1.700 1.700 0 1 0 3.400 0a1.700 1.700 0 1 0 -3.400 0M944.300 616.700a1.900 1.900 0 1 0 3.700 0a1.900 1.900 0 1 0 -3.700 0M944.200 616.600a2.500 2.500 0 1 0 5.100 0a2.500 2.500 0 1 0 -5.100 0M941.500 616a2.100 2.100 0 1 0 4.100 0a2.100 2.100 0 1 0 -4.100 0M939.700 616.600a2.600 2.600 0 1 0 5.200 0a2.600 2.600 0 1 0 -5.200 0M943.900 620.600a2.500 2.500 0 1 0 5 0a2.500 2.500 0 1 0 -5 0M946.100 616.400a2.300 2.300 0 1 0 4.500 0a2.300 2.300 0 1 0 -4.500 0M938.600 620a2.300 2.300 0 1 0 4.600 0a2.300 2.300 0 1 0 -4.600 0M934.200 617.900a2.800 2.800 0 1 0 5.500 0a2.800 2.800 0 1 0 -5.500 0M929.300 617.800a1.900 1.900 0 1 0 3.800 0a1.900 1.900 0 1 0 -3.800 0M937.600 618.600a2 2 0 1 0 4.100 0a2 2 0 1 0 -4.100 0M936.800 621.600a2.100 2.100 0 1 0 4.200 0a2.100 2.100 0 1 0 -4.200 0M942.500 613.500a1.800 1.800 0 1 0 3.700 0a1.800 1.800 0 1 0 -3.700 0M933.900 619.400a2.500 2.500 0 1 0 4.900 0a2.500 2.500 0 1 0 -4.900 0M941.400 617.600a2.600 2.600 0 1 0 5.200 0a2.600 2.600 0 1 0 -5.200 0M936.700 618.600a2.600 2.600 0 1 0 5.200 0a2.600 2.600 0 1 0 -5.200 0M935.200 619.900a2.200 2.200 0 1 0 4.300 0a2.200 2.200 0 1 0 -4.300 0M938.200 621.500a2.200 2.200 0 1 0 4.400 0a2.200 2.200 0 1 0 -4.400 0M930.900 620.100a2 2 0 1 0 4 0a2 2 0 1 0 -4 0M940.300 618.900a1.700 1.700 0 1 0 3.500 0a1.700 1.700 0 1 0 -3.500 0M931 617.600a2.700 2.700 0 1 0 5.300 0a2.700 2.700 0 1 0 -5.300 0M928.300 617.900a2.900 2.900 0 1 0 5.700 0a2.900 2.900 0 1 0 -5.700 0M939 618.300a1.800 1.800 0 1 0 3.600 0a1.800 1.800 0 1 0 -3.600 0" fill="#0a0a0a"/>
<text x="1107.300" y="650.600" font-family="Liberation Sans, sans-serif" font-size="11.300" fill="#222">Section A</text>
<path d="M1107.500 652.800 H1226" stroke="#333" stroke-width="1.300"/>
<rect x="1107.600" y="656.600" width="15" height="15" stroke="#222" stroke-width="1.100" fill="#fff"/>
<text x="1109.300" y="668.300" font-family="Liberation Sans, sans-serif" font-size="10.500" fill="#333">S1</text>
<text x="1200.300" y="663.200" font-family="Liberation Sans, sans-serif" font-size="10.400" fill="#222">1:125</text>
<path d="M1225.500 634.200 C1219 636 1212.500 639 1210.800 643.500 C1211 646 1213.500 648 1217 649.200 C1215.500 644.500 1218 639 1225.500 634.200 Z" fill="#d8241a"/>
<rect x="990" y="678" width="50.400" height="50" fill="#fff" stroke="#222" stroke-width="1.200"/><path d="M990 688.300 H1040.400" stroke="#222" stroke-width="1"/>
<rect x="649.8" y="678.200" width="20.8" height="50" rx="2" fill="#fff" stroke="#111" stroke-width="1.300"/>
<rect x="654" y="682.500" width="12.400" height="45" fill="#fff" stroke="#888" stroke-width=".8"/>
<rect x="656.4" y="684.500" width="7.600" height="6" fill="#fff" stroke="#999" stroke-width=".7"/>
<rect x="671" y="678.200" width="20.8" height="50" rx="2" fill="#fff" stroke="#111" stroke-width="1.300"/>
<rect x="675.2" y="682.500" width="12.400" height="45" fill="#fff" stroke="#888" stroke-width=".8"/>
<rect x="677.6" y="684.500" width="7.600" height="6" fill="#fff" stroke="#999" stroke-width=".7"/>
<rect x="692" y="678.200" width="20.8" height="50" rx="2" fill="#fff" stroke="#111" stroke-width="1.300"/>
<rect x="696.2" y="682.500" width="12.400" height="45" fill="#fff" stroke="#888" stroke-width=".8"/>
<rect x="698.6" y="684.500" width="7.600" height="6" fill="#fff" stroke="#999" stroke-width=".7"/>
<rect x="713" y="678.200" width="20.6" height="50" rx="2" fill="#fff" stroke="#111" stroke-width="1.300"/>
<rect x="717.2" y="682.500" width="12.400" height="45" fill="#fff" stroke="#888" stroke-width=".8"/>
<rect x="719.6" y="684.500" width="7.600" height="6" fill="#fff" stroke="#999" stroke-width=".7"/>
<rect x="733.800" y="689" width="37.500" height="40" fill="#fff" stroke="#111" stroke-width="1.200"/>
<rect x="736.300" y="693" width="32.700" height="36" fill="#060606"/>
<rect x="748" y="704.6" width="17" height="4" fill="#8fdcdc"/><path d="M752 706.6 h10" stroke="#2a6a6a" stroke-width="1" stroke-dasharray="2 1"/>
<rect x="748" y="711.4" width="17" height="4" fill="#8fdcdc"/><path d="M752 713.4 h10" stroke="#2a6a6a" stroke-width="1" stroke-dasharray="2 1"/>
<rect x="748" y="718.2" width="17" height="4" fill="#8fdcdc"/><path d="M752 720.2 h10" stroke="#2a6a6a" stroke-width="1" stroke-dasharray="2 1"/>
<text x="548.300" y="716.400" font-family="Liberation Sans, sans-serif" font-size="9" textLength="83.600" lengthAdjust="spacingAndGlyphs" fill="#222">Fuel dispenser nozzle</text>
<path d="M586 719.600 H629" stroke="#333" stroke-width="1.600"/>
<path d="M297 721 Q318 697 350 686 Q380 679 409 686 Q440 697 461 721" stroke="#222" stroke-width="1.300" fill="none"/>
<path d="M91.600 722 V697.500 Q91.600 694.600 95 694.400 H112.300 Q115.600 694.600 115.600 697.500 V722" fill="#fff" stroke="#111" stroke-width="1.700"/>
<path d="M97 698.600 h13" stroke="#d01818" stroke-width="1.700" stroke-dasharray="2.200 .5"/>
<path d="M93.400 722 V706 M113.900 722 V706" stroke="#c01818" stroke-width="2.200"/>
<path d="M95.600 722 V706 Q95.600 702.600 99.500 702.600 H108 Q112 702.600 112 706 V722" fill="#fff" stroke="#111" stroke-width="2"/>
<path d="M98.500 706 Q96.500 712 98.500 720" stroke="#111" stroke-width="1.600" fill="none"/>
<path d="M127.100 722 V697 Q127.100 694.500 130.100 694.500 Q133.100 694.500 133.100 697 V722" fill="#fff" stroke="#111" stroke-width="1.500"/><path d="M130.100 705.600 V722" stroke="#c01818" stroke-width="2.200"/><path d="M127.500 704.500 H132.800" stroke="#111" stroke-width="1.200"/>
<path d="M174.300 722 L175.200 690 Q175.400 686.900 178.500 686.700 H190.500 Q193.600 686.900 193.800 690 L194.700 722" fill="#e8e8e8" stroke="#111" stroke-width="2.100"/>
<path d="M178.600 722 V691 H191.600 V722" fill="#f6f6f6" stroke="#666" stroke-width=".7"/><path d="M179.500 698.600 h11.500" stroke="#d01818" stroke-width="1.700" stroke-dasharray="2.200 .4"/>
<path d="M174.400 708 Q171.500 714 173.500 722 M194.600 708 Q197.300 714 195.600 722" stroke="#111" stroke-width="1.400" fill="none"/>
<rect x="207.300" y="686.300" width="5.700" height="36" rx="2.200" fill="#2a2a2a" stroke="#0a0a0a" stroke-width="1"/></g>
</svg>
<svg class="abs" style="left:0;top:0" width="1280" height="720" viewBox="0 0 1280 720" font-family="'Liberation Sans','Noto Sans CJK JP',sans-serif">
<text x="14" y="229" font-size="20" font-weight="700" fill="#fff">ホーム</text>
<text x="114.500" y="229" font-size="20" fill="#d8d8d8">挿入</text>
<text x="204" y="229" font-size="20" fill="#d8d8d8">注釈</text>
<text x="284" y="229" font-size="20" fill="#d8d8d8">シート</text>
<text x="384" y="229" font-size="20" fill="#d8d8d8">管理</text>
<text x="464" y="229" font-size="20" fill="#d8d8d8">ビュー</text>
<text x="553" y="229" font-size="20" fill="#d8d8d8">コラボレート</text>
<text x="49" y="277.500" font-size="20" fill="#f0f0f0">線分</text>
<text x="173.500" y="277.500" font-size="20" fill="#f0f0f0">四角形</text>
<text x="49" y="323.500" font-size="20" fill="#f0f0f0">ポリライン</text>
<text x="234.500" y="323.500" font-size="20" fill="#f0f0f0">円</text>
<text x="1160.500" y="277.500" font-size="20" fill="#f0f0f0">文字</text>
<text x="237.500" y="362" font-size="16.500" font-weight="700" fill="#dcdcdc">作成</text>
<text x="679.500" y="362" font-size="16.500" font-weight="700" fill="#dcdcdc">修正</text>
<text x="1098" y="362" font-size="16.500" font-weight="700" fill="#dcdcdc">注釈</text>
<text x="962.500" y="167.500" font-size="17" fill="#f4f4f4">最終保存：</text>
</svg></div></body></html>
